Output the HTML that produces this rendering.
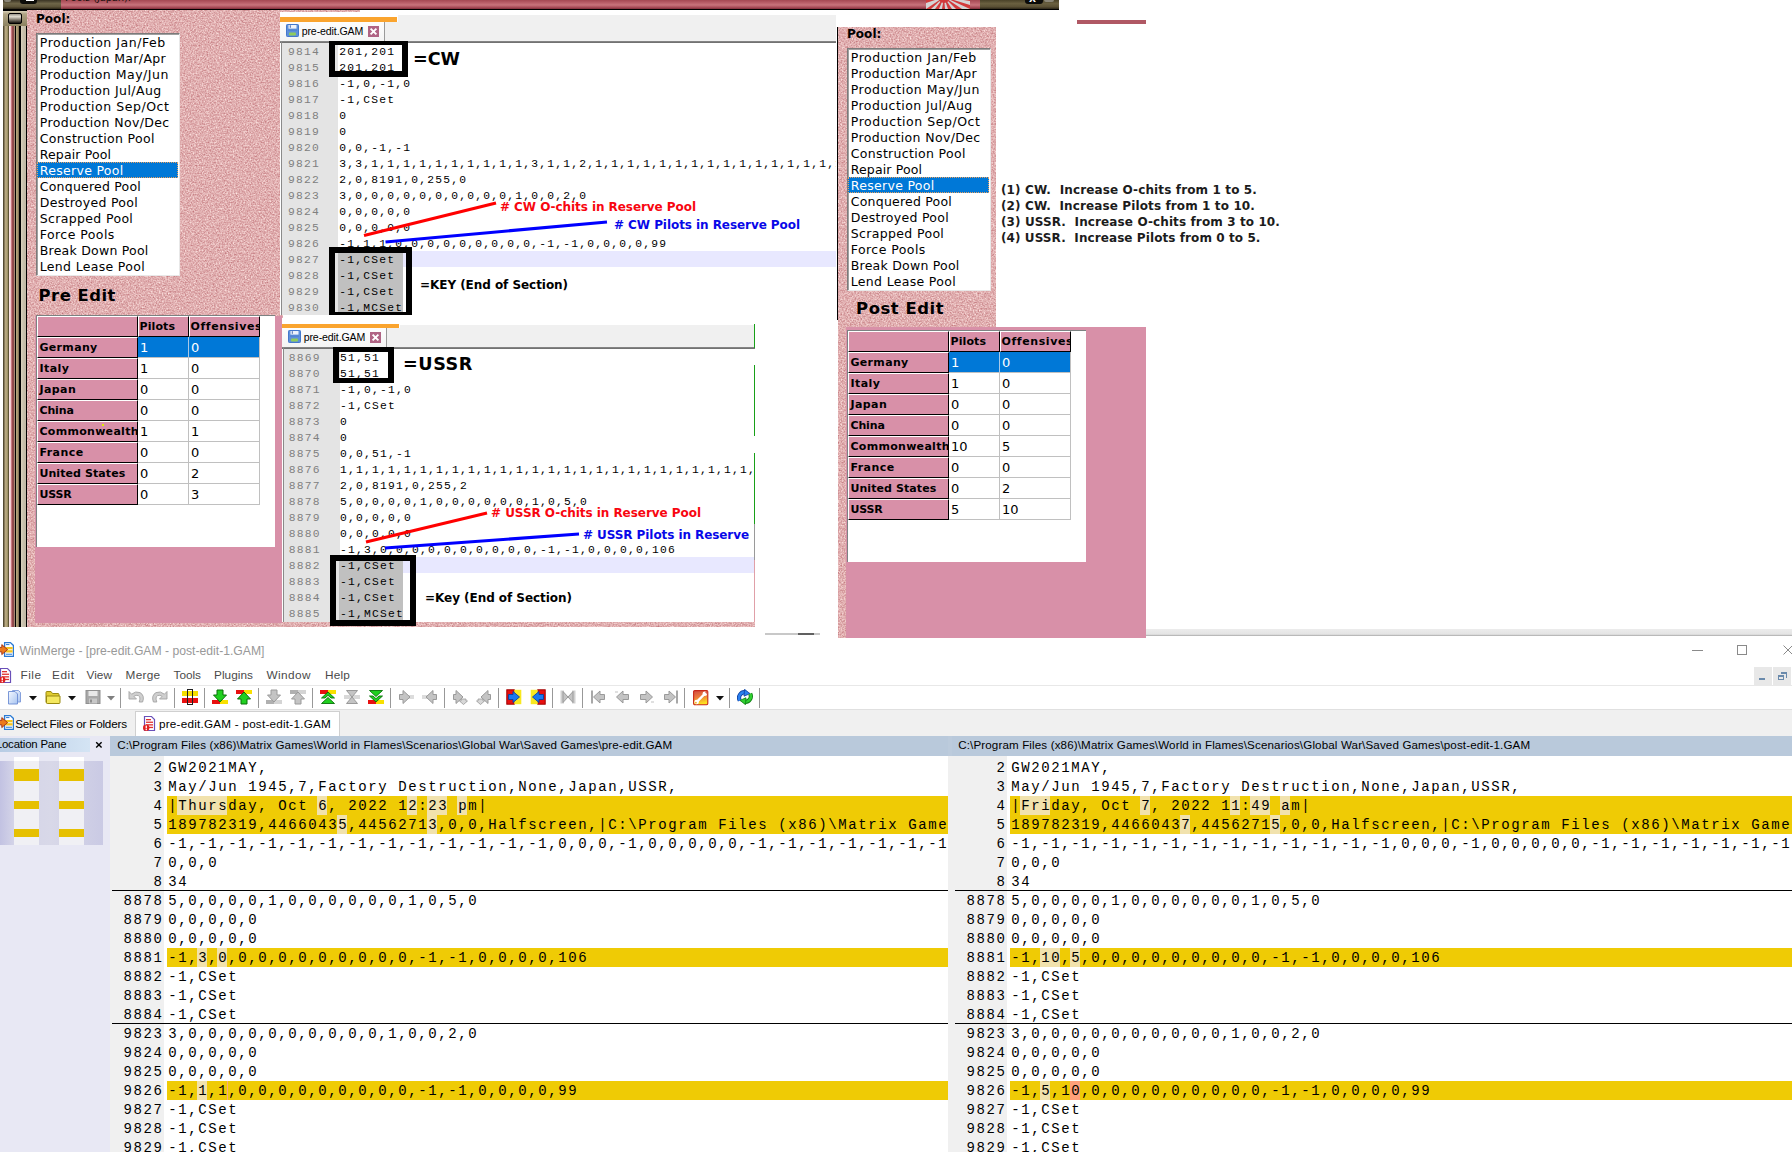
<!DOCTYPE html>
<html lang="en"><head><meta charset="utf-8"><title>WinMerge - [pre-edit.GAM - post-edit-1.GAM]</title>
<style>
html,body{margin:0;padding:0;background:#fff;}
body{width:1792px;height:1152px;position:relative;overflow:hidden;}
.a{position:absolute;box-sizing:border-box;}
.t{position:absolute;white-space:pre;display:block;}
</style></head><body>
<svg class="a" width="0" height="0" style="left:0;top:0"><defs>
<filter id="nz" x="0" y="0" width="100%" height="100%" color-interpolation-filters="sRGB"><feTurbulence type="fractalNoise" baseFrequency="0.65" numOctaves="3" seed="7"/>
<feColorMatrix type="matrix" values="0.30 0 0 0 0.730  0.54 0 0 0 0.415  0.50 0 0 0 0.440  0 0 0 0 1"/></filter>
</defs></svg>
<div class="a" style="left:27px;top:10px;width:256px;height:617px;background:#e2b0b1;overflow:hidden"><svg width="256" height="617" style="position:absolute;left:0;top:0"><rect width="256" height="617" filter="url(#nz)"/></svg></div>
<div class="a" style="left:283px;top:620px;width:472px;height:7px;background:#e2b0b1;overflow:hidden"><svg width="472" height="7" style="position:absolute;left:0;top:0"><rect width="472" height="7" filter="url(#nz)"/></svg></div>
<div class="a" style="left:280px;top:10px;width:80px;height:2.4px;background:#e2b0b1;overflow:hidden"><svg width="80" height="2.4" style="position:absolute;left:0;top:0"><rect width="80" height="2.4" filter="url(#nz)"/></svg></div>
<div class="a" style="left:3px;top:0px;width:1056px;height:10px;background:#000;"></div>
<div class="a" style="left:3px;top:0px;width:58px;height:9px;background:linear-gradient(#3a3424,#6e6548 40%,#5c5338 75%,#2c2618);"></div>
<div class="a" style="left:61px;top:0px;width:919px;height:9px;background:linear-gradient(#a44852,#bc626c 35%,#c8747c 55%,#aa4e5a 80%,#7e2e3a);"></div>
<div class="a" style="left:980px;top:0px;width:79px;height:9px;background:linear-gradient(#4a4228,#6a6040 40%,#5a5034 75%,#2c2618);"></div>
<div class="a" style="left:20px;top:0px;width:17px;height:4px;background:#0c0c08;border-radius:0 0 3px 3px"></div>
<div class="a" style="left:26px;top:0px;width:8px;height:1px;background:#fff;"></div>
<div class="a" style="left:4px;top:0px;width:7px;height:2px;background:#8a8678;border-radius:0 0 4px 4px"></div>
<div class="a" style="left:1025px;top:0px;width:18px;height:4px;background:#0a0a08;border-radius:0 0 3px 3px"></div>
<div class="a" style="left:1044px;top:0px;width:10px;height:2px;background:#8a8678;border-radius:0 0 5px 5px"></div>
<span class="t" style="left:1029px;top:-5.00px;font:700 9px/9px 'DejaVu Sans',Verdana,sans-serif;color:#fff;">X</span>
<div class="a" style="left:61px;top:0;width:200px;height:9px;overflow:hidden">
<span class="t" style="left:4px;top:-7.00px;font:400 10px/10px 'DejaVu Sans',Verdana,sans-serif;color:#201010;letter-spacing:-0.153px;">Pools (Japan):</span>
</div>
<svg class="a" style="left:926px;top:0" width="44" height="9" viewBox="0 0 44 9"><rect width="44" height="9" fill="#d4d4d6"/>
<g fill="#d23a3c"><circle cx="18" cy="-3" r="6"/>
<polygon points="18,-3 0,9 5,9"/><polygon points="18,-3 9,9 13,9"/><polygon points="18,-3 16,9 19,9"/><polygon points="18,-3 22,9 26,9"/>
<polygon points="18,-3 30,9 36,9"/><polygon points="18,-3 44,9 44,5"/><polygon points="18,-3 44,1 44,-2"/><polygon points="18,-3 0,3 0,0"/></g></svg>
<div class="a" style="left:3px;top:10px;width:24px;height:617px;background:linear-gradient(90deg,#3c3420 0,#c0b088 2.7px,#a09468 4.5px,#4c4428 5.8px,#fce8e8 6.3px,#f4d0d4 7.5px,#c87880 8.5px,#904848 9.6px,#8c4c4c 10.8px,#a89078 11.6px,#000 12px,#000 13px,#b4a47c 13.2px,#a89870 14.5px,#7c6850 16px,#000 16.2px,#000 17.6px,#dcd4c0 17.9px,#c8c0ac 20px,#c0b8a4 23px,#000 23.1px,#000 24px);"></div>
<div class="a" style="left:3px;top:10px;width:24px;height:16px;background:linear-gradient(#d8d0b8,#b0a484 20%,#8c8260);border-top:1px solid #000"></div>
<div class="a" style="left:8px;top:13px;width:14px;height:11px;background:linear-gradient(#9a968c,#e0dcd0 30%,#8a8478 60%,#181410);border:1px solid #000;border-radius:2px"></div>
<div class="a" style="left:35px;top:316px;width:247px;height:306.5px;background:#d890a8;"></div>
<span class="t" style="left:36px;top:12.71px;font:700 12px/12px 'DejaVu Sans',Verdana,sans-serif;color:#000;letter-spacing:0.039px;">Pool:</span>
<div class="a" style="left:35.5px;top:32.5px;width:144px;height:243px;background:#fff;border:1px solid #7a7a7a;border-right-color:#e8e8e8;border-bottom-color:#e8e8e8;box-shadow:inset 1px 1px 0 #a0a0a0"></div>
<span class="t" style="left:39.8px;top:37.41px;font:400 12.5px/12.5px 'DejaVu Sans',Verdana,sans-serif;color:#000;letter-spacing:0.550px;">Production Jan/Feb</span>
<span class="t" style="left:39.8px;top:53.41px;font:400 12.5px/12.5px 'DejaVu Sans',Verdana,sans-serif;color:#000;letter-spacing:0.355px;">Production Mar/Apr</span>
<span class="t" style="left:39.8px;top:69.41px;font:400 12.5px/12.5px 'DejaVu Sans',Verdana,sans-serif;color:#000;letter-spacing:0.497px;">Production May/Jun</span>
<span class="t" style="left:39.8px;top:85.41px;font:400 12.5px/12.5px 'DejaVu Sans',Verdana,sans-serif;color:#000;letter-spacing:0.428px;">Production Jul/Aug</span>
<span class="t" style="left:39.8px;top:101.41px;font:400 12.5px/12.5px 'DejaVu Sans',Verdana,sans-serif;color:#000;letter-spacing:0.546px;">Production Sep/Oct</span>
<span class="t" style="left:39.8px;top:117.41px;font:400 12.5px/12.5px 'DejaVu Sans',Verdana,sans-serif;color:#000;letter-spacing:0.357px;">Production Nov/Dec</span>
<span class="t" style="left:39.8px;top:133.41px;font:400 12.5px/12.5px 'DejaVu Sans',Verdana,sans-serif;color:#000;letter-spacing:0.321px;">Construction Pool</span>
<span class="t" style="left:39.8px;top:149.41px;font:400 12.5px/12.5px 'DejaVu Sans',Verdana,sans-serif;color:#000;letter-spacing:0.131px;">Repair Pool</span>
<div class="a" style="left:37px;top:162px;width:141px;height:16px;background:#0078d7;outline:1px dotted #e8a060;outline-offset:-1px"></div>
<span class="t" style="left:39.8px;top:165.41px;font:400 12.5px/12.5px 'DejaVu Sans',Verdana,sans-serif;color:#fff;letter-spacing:0.306px;">Reserve Pool</span>
<span class="t" style="left:39.8px;top:181.41px;font:400 12.5px/12.5px 'DejaVu Sans',Verdana,sans-serif;color:#000;letter-spacing:0.220px;">Conquered Pool</span>
<span class="t" style="left:39.8px;top:197.41px;font:400 12.5px/12.5px 'DejaVu Sans',Verdana,sans-serif;color:#000;letter-spacing:0.285px;">Destroyed Pool</span>
<span class="t" style="left:39.8px;top:213.41px;font:400 12.5px/12.5px 'DejaVu Sans',Verdana,sans-serif;color:#000;letter-spacing:0.343px;">Scrapped Pool</span>
<span class="t" style="left:39.8px;top:229.41px;font:400 12.5px/12.5px 'DejaVu Sans',Verdana,sans-serif;color:#000;letter-spacing:0.439px;">Force Pools</span>
<span class="t" style="left:39.8px;top:245.41px;font:400 12.5px/12.5px 'DejaVu Sans',Verdana,sans-serif;color:#000;letter-spacing:0.232px;">Break Down Pool</span>
<span class="t" style="left:39.8px;top:261.41px;font:400 12.5px/12.5px 'DejaVu Sans',Verdana,sans-serif;color:#000;letter-spacing:0.320px;">Lend Lease Pool</span>
<span class="t" style="left:38.6px;top:288.01px;font:700 16.4px/16.4px 'DejaVu Sans',Verdana,sans-serif;color:#000;letter-spacing:0.498px;">Pre Edit</span>
<div class="a" style="left:36px;top:315px;width:239px;height:231.5px;background:#fff;border-left:1px solid #7c8282;border-top:1px solid #7c8282"></div>
<div class="a" style="left:37px;top:316px;width:101px;height:21px;background:#d890a8;border-top:1px solid #fff;border-left:1px solid #fff;border-right:1px solid #000;border-bottom:1px solid #000;overflow:hidden;">
</div>
<div class="a" style="left:138px;top:316px;width:51px;height:21px;background:#d890a8;border-top:1px solid #fff;border-left:1px solid #fff;border-right:1px solid #000;border-bottom:1px solid #000;overflow:hidden;">
<span class="t" style="left:0.6px;top:3.71px;font:700 11px/11px 'DejaVu Sans',Verdana,sans-serif;color:#000;letter-spacing:0.089px;">Pilots</span>
</div>
<div class="a" style="left:189px;top:316px;width:71px;height:21px;background:#d890a8;border-top:1px solid #fff;border-left:1px solid #fff;border-right:1px solid #000;border-bottom:1px solid #000;overflow:hidden;">
<span class="t" style="left:0.5px;top:3.71px;font:700 11px/11px 'DejaVu Sans',Verdana,sans-serif;color:#000;letter-spacing:0.594px;">Offensives</span>
</div>
<div class="a" style="left:37px;top:337px;width:101px;height:21px;background:#d890a8;border-top:1px solid #fff;border-left:1px solid #fff;border-right:1px solid #000;border-bottom:1px solid #000;overflow:hidden;">
<span class="t" style="left:1.4px;top:3.61px;font:700 11px/11px 'DejaVu Sans',Verdana,sans-serif;color:#000;letter-spacing:0.341px;">Germany</span>
</div>
<div class="a" style="left:138px;top:337px;width:51px;height:21px;background:#0078d7;border-right:1px solid #a8c8e8;border-bottom:1px solid #c0c0c0"></div>
<span class="t" style="left:140.1px;top:340.50px;font:400 13px/13px 'DejaVu Sans',Verdana,sans-serif;color:#fff;">1</span>
<div class="a" style="left:189px;top:337px;width:71px;height:21px;background:#0078d7;border-right:1px solid #c0c0c0;border-bottom:1px solid #c0c0c0"></div>
<span class="t" style="left:191.1px;top:340.50px;font:400 13px/13px 'DejaVu Sans',Verdana,sans-serif;color:#fff;">0</span>
<div class="a" style="left:37px;top:358px;width:101px;height:21px;background:#d890a8;border-top:1px solid #fff;border-left:1px solid #fff;border-right:1px solid #000;border-bottom:1px solid #000;overflow:hidden;">
<span class="t" style="left:1.4px;top:3.61px;font:700 11px/11px 'DejaVu Sans',Verdana,sans-serif;color:#000;letter-spacing:0.456px;">Italy</span>
</div>
<div class="a" style="left:138px;top:358px;width:51px;height:21px;background:#fff;border-right:1px solid #c0c0c0;border-bottom:1px solid #c0c0c0"></div>
<span class="t" style="left:140.1px;top:361.50px;font:400 13px/13px 'DejaVu Sans',Verdana,sans-serif;color:#000;">1</span>
<div class="a" style="left:189px;top:358px;width:71px;height:21px;background:#fff;border-right:1px solid #c0c0c0;border-bottom:1px solid #c0c0c0"></div>
<span class="t" style="left:191.1px;top:361.50px;font:400 13px/13px 'DejaVu Sans',Verdana,sans-serif;color:#000;">0</span>
<div class="a" style="left:37px;top:379px;width:101px;height:21px;background:#d890a8;border-top:1px solid #fff;border-left:1px solid #fff;border-right:1px solid #000;border-bottom:1px solid #000;overflow:hidden;">
<span class="t" style="left:1.4px;top:3.61px;font:700 11px/11px 'DejaVu Sans',Verdana,sans-serif;color:#000;letter-spacing:0.429px;">Japan</span>
</div>
<div class="a" style="left:138px;top:379px;width:51px;height:21px;background:#fff;border-right:1px solid #c0c0c0;border-bottom:1px solid #c0c0c0"></div>
<span class="t" style="left:140.1px;top:382.50px;font:400 13px/13px 'DejaVu Sans',Verdana,sans-serif;color:#000;">0</span>
<div class="a" style="left:189px;top:379px;width:71px;height:21px;background:#fff;border-right:1px solid #c0c0c0;border-bottom:1px solid #c0c0c0"></div>
<span class="t" style="left:191.1px;top:382.50px;font:400 13px/13px 'DejaVu Sans',Verdana,sans-serif;color:#000;">0</span>
<div class="a" style="left:37px;top:400px;width:101px;height:21px;background:#d890a8;border-top:1px solid #fff;border-left:1px solid #fff;border-right:1px solid #000;border-bottom:1px solid #000;overflow:hidden;">
<span class="t" style="left:1.4px;top:3.61px;font:700 11px/11px 'DejaVu Sans',Verdana,sans-serif;color:#000;letter-spacing:-0.087px;">China</span>
</div>
<div class="a" style="left:138px;top:400px;width:51px;height:21px;background:#fff;border-right:1px solid #c0c0c0;border-bottom:1px solid #c0c0c0"></div>
<span class="t" style="left:140.1px;top:403.50px;font:400 13px/13px 'DejaVu Sans',Verdana,sans-serif;color:#000;">0</span>
<div class="a" style="left:189px;top:400px;width:71px;height:21px;background:#fff;border-right:1px solid #c0c0c0;border-bottom:1px solid #c0c0c0"></div>
<span class="t" style="left:191.1px;top:403.50px;font:400 13px/13px 'DejaVu Sans',Verdana,sans-serif;color:#000;">0</span>
<div class="a" style="left:37px;top:421px;width:101px;height:21px;background:#d890a8;border-top:1px solid #fff;border-left:1px solid #fff;border-right:1px solid #000;border-bottom:1px solid #000;overflow:hidden;">
<span class="t" style="left:1.4px;top:3.61px;font:700 11px/11px 'DejaVu Sans',Verdana,sans-serif;color:#000;letter-spacing:0.303px;">Commonwealth</span>
</div>
<div class="a" style="left:138px;top:421px;width:51px;height:21px;background:#fff;border-right:1px solid #c0c0c0;border-bottom:1px solid #c0c0c0"></div>
<span class="t" style="left:140.1px;top:424.50px;font:400 13px/13px 'DejaVu Sans',Verdana,sans-serif;color:#000;">1</span>
<div class="a" style="left:189px;top:421px;width:71px;height:21px;background:#fff;border-right:1px solid #c0c0c0;border-bottom:1px solid #c0c0c0"></div>
<span class="t" style="left:191.1px;top:424.50px;font:400 13px/13px 'DejaVu Sans',Verdana,sans-serif;color:#000;">1</span>
<div class="a" style="left:37px;top:442px;width:101px;height:21px;background:#d890a8;border-top:1px solid #fff;border-left:1px solid #fff;border-right:1px solid #000;border-bottom:1px solid #000;overflow:hidden;">
<span class="t" style="left:1.4px;top:3.61px;font:700 11px/11px 'DejaVu Sans',Verdana,sans-serif;color:#000;letter-spacing:0.453px;">France</span>
</div>
<div class="a" style="left:138px;top:442px;width:51px;height:21px;background:#fff;border-right:1px solid #c0c0c0;border-bottom:1px solid #c0c0c0"></div>
<span class="t" style="left:140.1px;top:445.50px;font:400 13px/13px 'DejaVu Sans',Verdana,sans-serif;color:#000;">0</span>
<div class="a" style="left:189px;top:442px;width:71px;height:21px;background:#fff;border-right:1px solid #c0c0c0;border-bottom:1px solid #c0c0c0"></div>
<span class="t" style="left:191.1px;top:445.50px;font:400 13px/13px 'DejaVu Sans',Verdana,sans-serif;color:#000;">0</span>
<div class="a" style="left:37px;top:463px;width:101px;height:21px;background:#d890a8;border-top:1px solid #fff;border-left:1px solid #fff;border-right:1px solid #000;border-bottom:1px solid #000;overflow:hidden;">
<span class="t" style="left:1.4px;top:3.61px;font:700 11px/11px 'DejaVu Sans',Verdana,sans-serif;color:#000;letter-spacing:0.090px;">United States</span>
</div>
<div class="a" style="left:138px;top:463px;width:51px;height:21px;background:#fff;border-right:1px solid #c0c0c0;border-bottom:1px solid #c0c0c0"></div>
<span class="t" style="left:140.1px;top:466.50px;font:400 13px/13px 'DejaVu Sans',Verdana,sans-serif;color:#000;">0</span>
<div class="a" style="left:189px;top:463px;width:71px;height:21px;background:#fff;border-right:1px solid #c0c0c0;border-bottom:1px solid #c0c0c0"></div>
<span class="t" style="left:191.1px;top:466.50px;font:400 13px/13px 'DejaVu Sans',Verdana,sans-serif;color:#000;">2</span>
<div class="a" style="left:37px;top:484px;width:101px;height:21px;background:#d890a8;border-top:1px solid #fff;border-left:1px solid #fff;border-right:1px solid #000;border-bottom:1px solid #000;overflow:hidden;">
<span class="t" style="left:1.4px;top:3.61px;font:700 11px/11px 'DejaVu Sans',Verdana,sans-serif;color:#000;letter-spacing:-0.116px;">USSR</span>
</div>
<div class="a" style="left:138px;top:484px;width:51px;height:21px;background:#fff;border-right:1px solid #c0c0c0;border-bottom:1px solid #c0c0c0"></div>
<span class="t" style="left:140.1px;top:487.50px;font:400 13px/13px 'DejaVu Sans',Verdana,sans-serif;color:#000;">0</span>
<div class="a" style="left:189px;top:484px;width:71px;height:21px;background:#fff;border-right:1px solid #c0c0c0;border-bottom:1px solid #c0c0c0"></div>
<span class="t" style="left:191.1px;top:487.50px;font:400 13px/13px 'DejaVu Sans',Verdana,sans-serif;color:#000;">3</span>
<div class="a" style="left:102px;top:424px;width:2px;height:2px;background:#e0f000;"></div>
<div class="a" style="left:838px;top:27px;width:158px;height:300px;background:#e2b0b1;overflow:hidden"><svg width="158" height="300" style="position:absolute;left:0;top:0"><rect width="158" height="300" filter="url(#nz)"/></svg></div>
<div class="a" style="left:838px;top:327px;width:8px;height:311px;background:#e2b0b1;overflow:hidden"><svg width="8" height="311" style="position:absolute;left:0;top:0"><rect width="8" height="311" filter="url(#nz)"/></svg></div>
<div class="a" style="left:836.5px;top:27px;width:1.5px;height:293px;background:#000;"></div>
<div class="a" style="left:846px;top:327px;width:300px;height:311px;background:#d890a8;"></div>
<span class="t" style="left:847px;top:27.71px;font:700 12px/12px 'DejaVu Sans',Verdana,sans-serif;color:#000;letter-spacing:0.039px;">Pool:</span>
<div class="a" style="left:846.5px;top:47.5px;width:144px;height:243px;background:#fff;border:1px solid #7a7a7a;border-right-color:#e8e8e8;border-bottom-color:#e8e8e8;box-shadow:inset 1px 1px 0 #a0a0a0"></div>
<span class="t" style="left:850.8px;top:52.41px;font:400 12.5px/12.5px 'DejaVu Sans',Verdana,sans-serif;color:#000;letter-spacing:0.550px;">Production Jan/Feb</span>
<span class="t" style="left:850.8px;top:68.41px;font:400 12.5px/12.5px 'DejaVu Sans',Verdana,sans-serif;color:#000;letter-spacing:0.355px;">Production Mar/Apr</span>
<span class="t" style="left:850.8px;top:84.41px;font:400 12.5px/12.5px 'DejaVu Sans',Verdana,sans-serif;color:#000;letter-spacing:0.497px;">Production May/Jun</span>
<span class="t" style="left:850.8px;top:100.41px;font:400 12.5px/12.5px 'DejaVu Sans',Verdana,sans-serif;color:#000;letter-spacing:0.428px;">Production Jul/Aug</span>
<span class="t" style="left:850.8px;top:116.41px;font:400 12.5px/12.5px 'DejaVu Sans',Verdana,sans-serif;color:#000;letter-spacing:0.546px;">Production Sep/Oct</span>
<span class="t" style="left:850.8px;top:132.41px;font:400 12.5px/12.5px 'DejaVu Sans',Verdana,sans-serif;color:#000;letter-spacing:0.357px;">Production Nov/Dec</span>
<span class="t" style="left:850.8px;top:148.41px;font:400 12.5px/12.5px 'DejaVu Sans',Verdana,sans-serif;color:#000;letter-spacing:0.321px;">Construction Pool</span>
<span class="t" style="left:850.8px;top:164.41px;font:400 12.5px/12.5px 'DejaVu Sans',Verdana,sans-serif;color:#000;letter-spacing:0.131px;">Repair Pool</span>
<div class="a" style="left:848px;top:177px;width:141px;height:16px;background:#0078d7;outline:1px dotted #e8a060;outline-offset:-1px"></div>
<span class="t" style="left:850.8px;top:180.41px;font:400 12.5px/12.5px 'DejaVu Sans',Verdana,sans-serif;color:#fff;letter-spacing:0.306px;">Reserve Pool</span>
<span class="t" style="left:850.8px;top:196.41px;font:400 12.5px/12.5px 'DejaVu Sans',Verdana,sans-serif;color:#000;letter-spacing:0.220px;">Conquered Pool</span>
<span class="t" style="left:850.8px;top:212.41px;font:400 12.5px/12.5px 'DejaVu Sans',Verdana,sans-serif;color:#000;letter-spacing:0.285px;">Destroyed Pool</span>
<span class="t" style="left:850.8px;top:228.41px;font:400 12.5px/12.5px 'DejaVu Sans',Verdana,sans-serif;color:#000;letter-spacing:0.343px;">Scrapped Pool</span>
<span class="t" style="left:850.8px;top:244.41px;font:400 12.5px/12.5px 'DejaVu Sans',Verdana,sans-serif;color:#000;letter-spacing:0.439px;">Force Pools</span>
<span class="t" style="left:850.8px;top:260.41px;font:400 12.5px/12.5px 'DejaVu Sans',Verdana,sans-serif;color:#000;letter-spacing:0.232px;">Break Down Pool</span>
<span class="t" style="left:850.8px;top:276.41px;font:400 12.5px/12.5px 'DejaVu Sans',Verdana,sans-serif;color:#000;letter-spacing:0.320px;">Lend Lease Pool</span>
<span class="t" style="left:856.1px;top:301.20px;font:700 16.4px/16.4px 'DejaVu Sans',Verdana,sans-serif;color:#000;letter-spacing:0.559px;">Post Edit</span>
<div class="a" style="left:847px;top:330px;width:239px;height:231.5px;background:#fff;border-left:1px solid #7c8282;border-top:1px solid #7c8282"></div>
<div class="a" style="left:848px;top:331px;width:101px;height:21px;background:#d890a8;border-top:1px solid #fff;border-left:1px solid #fff;border-right:1px solid #000;border-bottom:1px solid #000;overflow:hidden;">
</div>
<div class="a" style="left:949px;top:331px;width:51px;height:21px;background:#d890a8;border-top:1px solid #fff;border-left:1px solid #fff;border-right:1px solid #000;border-bottom:1px solid #000;overflow:hidden;">
<span class="t" style="left:0.6px;top:3.71px;font:700 11px/11px 'DejaVu Sans',Verdana,sans-serif;color:#000;letter-spacing:0.089px;">Pilots</span>
</div>
<div class="a" style="left:1000px;top:331px;width:71px;height:21px;background:#d890a8;border-top:1px solid #fff;border-left:1px solid #fff;border-right:1px solid #000;border-bottom:1px solid #000;overflow:hidden;">
<span class="t" style="left:0.5px;top:3.71px;font:700 11px/11px 'DejaVu Sans',Verdana,sans-serif;color:#000;letter-spacing:0.594px;">Offensives</span>
</div>
<div class="a" style="left:848px;top:352px;width:101px;height:21px;background:#d890a8;border-top:1px solid #fff;border-left:1px solid #fff;border-right:1px solid #000;border-bottom:1px solid #000;overflow:hidden;">
<span class="t" style="left:1.4px;top:3.61px;font:700 11px/11px 'DejaVu Sans',Verdana,sans-serif;color:#000;letter-spacing:0.341px;">Germany</span>
</div>
<div class="a" style="left:949px;top:352px;width:51px;height:21px;background:#0078d7;border-right:1px solid #a8c8e8;border-bottom:1px solid #c0c0c0"></div>
<span class="t" style="left:951.1px;top:355.50px;font:400 13px/13px 'DejaVu Sans',Verdana,sans-serif;color:#fff;">1</span>
<div class="a" style="left:1000px;top:352px;width:71px;height:21px;background:#0078d7;border-right:1px solid #c0c0c0;border-bottom:1px solid #c0c0c0"></div>
<span class="t" style="left:1002.1px;top:355.50px;font:400 13px/13px 'DejaVu Sans',Verdana,sans-serif;color:#fff;">0</span>
<div class="a" style="left:848px;top:373px;width:101px;height:21px;background:#d890a8;border-top:1px solid #fff;border-left:1px solid #fff;border-right:1px solid #000;border-bottom:1px solid #000;overflow:hidden;">
<span class="t" style="left:1.4px;top:3.61px;font:700 11px/11px 'DejaVu Sans',Verdana,sans-serif;color:#000;letter-spacing:0.456px;">Italy</span>
</div>
<div class="a" style="left:949px;top:373px;width:51px;height:21px;background:#fff;border-right:1px solid #c0c0c0;border-bottom:1px solid #c0c0c0"></div>
<span class="t" style="left:951.1px;top:376.50px;font:400 13px/13px 'DejaVu Sans',Verdana,sans-serif;color:#000;">1</span>
<div class="a" style="left:1000px;top:373px;width:71px;height:21px;background:#fff;border-right:1px solid #c0c0c0;border-bottom:1px solid #c0c0c0"></div>
<span class="t" style="left:1002.1px;top:376.50px;font:400 13px/13px 'DejaVu Sans',Verdana,sans-serif;color:#000;">0</span>
<div class="a" style="left:848px;top:394px;width:101px;height:21px;background:#d890a8;border-top:1px solid #fff;border-left:1px solid #fff;border-right:1px solid #000;border-bottom:1px solid #000;overflow:hidden;">
<span class="t" style="left:1.4px;top:3.61px;font:700 11px/11px 'DejaVu Sans',Verdana,sans-serif;color:#000;letter-spacing:0.429px;">Japan</span>
</div>
<div class="a" style="left:949px;top:394px;width:51px;height:21px;background:#fff;border-right:1px solid #c0c0c0;border-bottom:1px solid #c0c0c0"></div>
<span class="t" style="left:951.1px;top:397.50px;font:400 13px/13px 'DejaVu Sans',Verdana,sans-serif;color:#000;">0</span>
<div class="a" style="left:1000px;top:394px;width:71px;height:21px;background:#fff;border-right:1px solid #c0c0c0;border-bottom:1px solid #c0c0c0"></div>
<span class="t" style="left:1002.1px;top:397.50px;font:400 13px/13px 'DejaVu Sans',Verdana,sans-serif;color:#000;">0</span>
<div class="a" style="left:848px;top:415px;width:101px;height:21px;background:#d890a8;border-top:1px solid #fff;border-left:1px solid #fff;border-right:1px solid #000;border-bottom:1px solid #000;overflow:hidden;">
<span class="t" style="left:1.4px;top:3.61px;font:700 11px/11px 'DejaVu Sans',Verdana,sans-serif;color:#000;letter-spacing:-0.087px;">China</span>
</div>
<div class="a" style="left:949px;top:415px;width:51px;height:21px;background:#fff;border-right:1px solid #c0c0c0;border-bottom:1px solid #c0c0c0"></div>
<span class="t" style="left:951.1px;top:418.50px;font:400 13px/13px 'DejaVu Sans',Verdana,sans-serif;color:#000;">0</span>
<div class="a" style="left:1000px;top:415px;width:71px;height:21px;background:#fff;border-right:1px solid #c0c0c0;border-bottom:1px solid #c0c0c0"></div>
<span class="t" style="left:1002.1px;top:418.50px;font:400 13px/13px 'DejaVu Sans',Verdana,sans-serif;color:#000;">0</span>
<div class="a" style="left:848px;top:436px;width:101px;height:21px;background:#d890a8;border-top:1px solid #fff;border-left:1px solid #fff;border-right:1px solid #000;border-bottom:1px solid #000;overflow:hidden;">
<span class="t" style="left:1.4px;top:3.61px;font:700 11px/11px 'DejaVu Sans',Verdana,sans-serif;color:#000;letter-spacing:0.303px;">Commonwealth</span>
</div>
<div class="a" style="left:949px;top:436px;width:51px;height:21px;background:#fff;border-right:1px solid #c0c0c0;border-bottom:1px solid #c0c0c0"></div>
<span class="t" style="left:951.1px;top:439.50px;font:400 13px/13px 'DejaVu Sans',Verdana,sans-serif;color:#000;">10</span>
<div class="a" style="left:1000px;top:436px;width:71px;height:21px;background:#fff;border-right:1px solid #c0c0c0;border-bottom:1px solid #c0c0c0"></div>
<span class="t" style="left:1002.1px;top:439.50px;font:400 13px/13px 'DejaVu Sans',Verdana,sans-serif;color:#000;">5</span>
<div class="a" style="left:848px;top:457px;width:101px;height:21px;background:#d890a8;border-top:1px solid #fff;border-left:1px solid #fff;border-right:1px solid #000;border-bottom:1px solid #000;overflow:hidden;">
<span class="t" style="left:1.4px;top:3.61px;font:700 11px/11px 'DejaVu Sans',Verdana,sans-serif;color:#000;letter-spacing:0.453px;">France</span>
</div>
<div class="a" style="left:949px;top:457px;width:51px;height:21px;background:#fff;border-right:1px solid #c0c0c0;border-bottom:1px solid #c0c0c0"></div>
<span class="t" style="left:951.1px;top:460.50px;font:400 13px/13px 'DejaVu Sans',Verdana,sans-serif;color:#000;">0</span>
<div class="a" style="left:1000px;top:457px;width:71px;height:21px;background:#fff;border-right:1px solid #c0c0c0;border-bottom:1px solid #c0c0c0"></div>
<span class="t" style="left:1002.1px;top:460.50px;font:400 13px/13px 'DejaVu Sans',Verdana,sans-serif;color:#000;">0</span>
<div class="a" style="left:848px;top:478px;width:101px;height:21px;background:#d890a8;border-top:1px solid #fff;border-left:1px solid #fff;border-right:1px solid #000;border-bottom:1px solid #000;overflow:hidden;">
<span class="t" style="left:1.4px;top:3.61px;font:700 11px/11px 'DejaVu Sans',Verdana,sans-serif;color:#000;letter-spacing:0.090px;">United States</span>
</div>
<div class="a" style="left:949px;top:478px;width:51px;height:21px;background:#fff;border-right:1px solid #c0c0c0;border-bottom:1px solid #c0c0c0"></div>
<span class="t" style="left:951.1px;top:481.50px;font:400 13px/13px 'DejaVu Sans',Verdana,sans-serif;color:#000;">0</span>
<div class="a" style="left:1000px;top:478px;width:71px;height:21px;background:#fff;border-right:1px solid #c0c0c0;border-bottom:1px solid #c0c0c0"></div>
<span class="t" style="left:1002.1px;top:481.50px;font:400 13px/13px 'DejaVu Sans',Verdana,sans-serif;color:#000;">2</span>
<div class="a" style="left:848px;top:499px;width:101px;height:21px;background:#d890a8;border-top:1px solid #fff;border-left:1px solid #fff;border-right:1px solid #000;border-bottom:1px solid #000;overflow:hidden;">
<span class="t" style="left:1.4px;top:3.61px;font:700 11px/11px 'DejaVu Sans',Verdana,sans-serif;color:#000;letter-spacing:-0.116px;">USSR</span>
</div>
<div class="a" style="left:949px;top:499px;width:51px;height:21px;background:#fff;border-right:1px solid #c0c0c0;border-bottom:1px solid #c0c0c0"></div>
<span class="t" style="left:951.1px;top:502.50px;font:400 13px/13px 'DejaVu Sans',Verdana,sans-serif;color:#000;">5</span>
<div class="a" style="left:1000px;top:499px;width:71px;height:21px;background:#fff;border-right:1px solid #c0c0c0;border-bottom:1px solid #c0c0c0"></div>
<span class="t" style="left:1002.1px;top:502.50px;font:400 13px/13px 'DejaVu Sans',Verdana,sans-serif;color:#000;">10</span>
<div class="a" style="left:1077px;top:20px;width:69px;height:4px;background:#b05864;"></div>
<div class="a" style="left:1146px;top:629px;width:646px;height:6.5px;background:linear-gradient(#ececec,#e4e4e4 75%,#a8a8a8);"></div>
<div class="a" style="left:765px;top:632.5px;width:55px;height:2px;background:#c8c8c8;"></div>
<div class="a" style="left:798px;top:632.5px;width:16px;height:2px;background:#606060;"></div>
<span class="t" style="left:1001px;top:183.50px;font:700 12px/12px 'DejaVu Sans',Verdana,sans-serif;color:#1c1c1c;letter-spacing:0.129px;">(1) CW.  Increase O-chits from 1 to 5.</span>
<span class="t" style="left:1001px;top:199.50px;font:700 12px/12px 'DejaVu Sans',Verdana,sans-serif;color:#1c1c1c;letter-spacing:0.117px;">(2) CW.  Increase Pilots from 1 to 10.</span>
<span class="t" style="left:1001px;top:215.50px;font:700 12px/12px 'DejaVu Sans',Verdana,sans-serif;color:#1c1c1c;letter-spacing:0.114px;">(3) USSR.  Increase O-chits from 3 to 10.</span>
<span class="t" style="left:1001px;top:231.50px;font:700 12px/12px 'DejaVu Sans',Verdana,sans-serif;color:#1c1c1c;letter-spacing:0.088px;">(4) USSR.  Increase Pilots from 0 to 5.</span>
<div class="a" style="left:280px;top:12px;width:556px;height:303px;background:#fff;overflow:hidden">
<div class="a" style="left:0px;top:2.5px;width:556px;height:27.5px;background:#f0f0f0;"></div>
<div class="a" style="left:0px;top:0px;width:118px;height:10px;background:#fff;"></div>
<div class="a" style="left:0px;top:5px;width:117px;height:5px;background:#faa42e;"></div>
<div class="a" style="left:0px;top:10px;width:105px;height:19.5px;background:linear-gradient(#fdfdfd,#f4f4f4);border-right:1px solid #9a9a9a"></div>
<svg class="a" style="left:6px;top:11.9px" width="13" height="13" viewBox="0 0 13 13"><rect x="0.5" y="0.5" width="12" height="12" rx="0.8" fill="#5e90da" stroke="#4478cc"/><rect x="2.5" y="1" width="8" height="3.6" fill="#eef3fc"/><rect x="3.8" y="1.2" width="1" height="2.6" fill="#4a6cb0"/><rect x="2" y="5.6" width="9" height="1" fill="#4d7fd0"/><rect x="3" y="8.6" width="7" height="2.8" rx="0.8" fill="#90cc5c"/></svg>
<span class="t" style="left:21.7px;top:13.71px;font:400 10.6px/10.6px 'Liberation Sans',Arial,sans-serif;color:#000;letter-spacing:-0.117px;">pre-edit.GAM</span>
<svg class="a" style="left:88px;top:13.5px" width="11" height="11" viewBox="0 0 11 11"><rect width="11" height="11" fill="#b06484"/><path d="M2.6 2.6 L8.4 8.4 M8.4 2.6 L2.6 8.4" stroke="#fff" stroke-width="1.9"/></svg>
<div class="a" style="left:0px;top:29px;width:556px;height:2px;background:linear-gradient(#8c8c8c,#6a6a6a);"></div>
<div class="a" style="left:1px;top:29px;width:1px;height:274px;background:#8a8a8a;"></div>
<div class="a" style="left:2px;top:31px;width:56px;height:272px;background:#e4e4e4;"></div>
<div class="a" style="left:58px;top:239px;width:498px;height:16px;background:#e8e8ff;"></div>
<div class="a" style="left:58px;top:239px;width:64.5px;height:64px;background:#c0c0c0;"></div>
<span class="t" style="left:8.0px;top:34.71px;font:400 11.3px/11.3px 'Liberation Mono','Courier New',monospace;color:#808080;letter-spacing:1.219px;">9814</span>
<span class="t" style="left:59.2px;top:34.71px;font:400 11.3px/11.3px 'Liberation Mono','Courier New',monospace;color:#000;letter-spacing:1.219px;">201,201</span>
<span class="t" style="left:8.0px;top:50.71px;font:400 11.3px/11.3px 'Liberation Mono','Courier New',monospace;color:#808080;letter-spacing:1.219px;">9815</span>
<span class="t" style="left:59.2px;top:50.71px;font:400 11.3px/11.3px 'Liberation Mono','Courier New',monospace;color:#000;letter-spacing:1.219px;">201,201</span>
<span class="t" style="left:8.0px;top:66.71px;font:400 11.3px/11.3px 'Liberation Mono','Courier New',monospace;color:#808080;letter-spacing:1.219px;">9816</span>
<span class="t" style="left:59.2px;top:66.71px;font:400 11.3px/11.3px 'Liberation Mono','Courier New',monospace;color:#000;letter-spacing:1.220px;">-1,0,-1,0</span>
<span class="t" style="left:8.0px;top:82.71px;font:400 11.3px/11.3px 'Liberation Mono','Courier New',monospace;color:#808080;letter-spacing:1.219px;">9817</span>
<span class="t" style="left:59.2px;top:82.71px;font:400 11.3px/11.3px 'Liberation Mono','Courier New',monospace;color:#000;letter-spacing:1.219px;">-1,CSet</span>
<span class="t" style="left:8.0px;top:98.71px;font:400 11.3px/11.3px 'Liberation Mono','Courier New',monospace;color:#808080;letter-spacing:1.219px;">9818</span>
<span class="t" style="left:59.2px;top:98.71px;font:400 11.3px/11.3px 'Liberation Mono','Courier New',monospace;color:#000;letter-spacing:1.219px;">0</span>
<span class="t" style="left:8.0px;top:114.71px;font:400 11.3px/11.3px 'Liberation Mono','Courier New',monospace;color:#808080;letter-spacing:1.219px;">9819</span>
<span class="t" style="left:59.2px;top:114.71px;font:400 11.3px/11.3px 'Liberation Mono','Courier New',monospace;color:#000;letter-spacing:1.219px;">0</span>
<span class="t" style="left:8.0px;top:130.71px;font:400 11.3px/11.3px 'Liberation Mono','Courier New',monospace;color:#808080;letter-spacing:1.219px;">9820</span>
<span class="t" style="left:59.2px;top:130.71px;font:400 11.3px/11.3px 'Liberation Mono','Courier New',monospace;color:#000;letter-spacing:1.220px;">0,0,-1,-1</span>
<span class="t" style="left:8.0px;top:146.71px;font:400 11.3px/11.3px 'Liberation Mono','Courier New',monospace;color:#808080;letter-spacing:1.219px;">9821</span>
<span class="t" style="left:59.2px;top:146.71px;font:400 11.3px/11.3px 'Liberation Mono','Courier New',monospace;color:#000;letter-spacing:1.221px;">3,3,1,1,1,1,1,1,1,1,1,1,3,1,1,2,1,1,1,1,1,1,1,1,1,1,1,1,1,1,1,1,1</span>
<span class="t" style="left:8.0px;top:162.71px;font:400 11.3px/11.3px 'Liberation Mono','Courier New',monospace;color:#808080;letter-spacing:1.219px;">9822</span>
<span class="t" style="left:59.2px;top:162.71px;font:400 11.3px/11.3px 'Liberation Mono','Courier New',monospace;color:#000;letter-spacing:1.221px;">2,0,8191,0,255,0</span>
<span class="t" style="left:8.0px;top:178.71px;font:400 11.3px/11.3px 'Liberation Mono','Courier New',monospace;color:#808080;letter-spacing:1.219px;">9823</span>
<span class="t" style="left:59.2px;top:178.71px;font:400 11.3px/11.3px 'Liberation Mono','Courier New',monospace;color:#000;letter-spacing:1.220px;">3,0,0,0,0,0,0,0,0,0,0,1,0,0,2,0</span>
<span class="t" style="left:8.0px;top:194.71px;font:400 11.3px/11.3px 'Liberation Mono','Courier New',monospace;color:#808080;letter-spacing:1.219px;">9824</span>
<span class="t" style="left:59.2px;top:194.71px;font:400 11.3px/11.3px 'Liberation Mono','Courier New',monospace;color:#000;letter-spacing:1.220px;">0,0,0,0,0</span>
<span class="t" style="left:8.0px;top:210.71px;font:400 11.3px/11.3px 'Liberation Mono','Courier New',monospace;color:#808080;letter-spacing:1.219px;">9825</span>
<span class="t" style="left:59.2px;top:210.71px;font:400 11.3px/11.3px 'Liberation Mono','Courier New',monospace;color:#000;letter-spacing:1.220px;">0,0,0,0,0</span>
<span class="t" style="left:8.0px;top:226.71px;font:400 11.3px/11.3px 'Liberation Mono','Courier New',monospace;color:#808080;letter-spacing:1.219px;">9826</span>
<span class="t" style="left:59.2px;top:226.71px;font:400 11.3px/11.3px 'Liberation Mono','Courier New',monospace;color:#000;letter-spacing:1.221px;">-1,1,1,0,0,0,0,0,0,0,0,0,-1,-1,0,0,0,0,99</span>
<span class="t" style="left:8.0px;top:242.71px;font:400 11.3px/11.3px 'Liberation Mono','Courier New',monospace;color:#808080;letter-spacing:1.219px;">9827</span>
<span class="t" style="left:59.2px;top:242.71px;font:400 11.3px/11.3px 'Liberation Mono','Courier New',monospace;color:#000;letter-spacing:1.219px;">-1,CSet</span>
<span class="t" style="left:8.0px;top:258.71px;font:400 11.3px/11.3px 'Liberation Mono','Courier New',monospace;color:#808080;letter-spacing:1.219px;">9828</span>
<span class="t" style="left:59.2px;top:258.71px;font:400 11.3px/11.3px 'Liberation Mono','Courier New',monospace;color:#000;letter-spacing:1.219px;">-1,CSet</span>
<span class="t" style="left:8.0px;top:274.71px;font:400 11.3px/11.3px 'Liberation Mono','Courier New',monospace;color:#808080;letter-spacing:1.219px;">9829</span>
<span class="t" style="left:59.2px;top:274.71px;font:400 11.3px/11.3px 'Liberation Mono','Courier New',monospace;color:#000;letter-spacing:1.219px;">-1,CSet</span>
<span class="t" style="left:8.0px;top:290.71px;font:400 11.3px/11.3px 'Liberation Mono','Courier New',monospace;color:#808080;letter-spacing:1.219px;">9830</span>
<span class="t" style="left:59.2px;top:290.71px;font:400 11.3px/11.3px 'Liberation Mono','Courier New',monospace;color:#000;letter-spacing:1.221px;">-1,MCSet</span>
</div>
<div class="a" style="left:282px;top:318px;width:473px;height:304px;background:#fff;overflow:hidden">
<div class="a" style="left:0px;top:7px;width:473px;height:23px;background:#f0f0f0;"></div>
<div class="a" style="left:0px;top:0px;width:118px;height:10px;background:#fff;"></div>
<div class="a" style="left:0px;top:6px;width:117px;height:4px;background:#faa42e;"></div>
<div class="a" style="left:0px;top:10px;width:105px;height:19.5px;background:linear-gradient(#fdfdfd,#f4f4f4);border-right:1px solid #9a9a9a"></div>
<svg class="a" style="left:6px;top:11.9px" width="13" height="13" viewBox="0 0 13 13"><rect x="0.5" y="0.5" width="12" height="12" rx="0.8" fill="#5e90da" stroke="#4478cc"/><rect x="2.5" y="1" width="8" height="3.6" fill="#eef3fc"/><rect x="3.8" y="1.2" width="1" height="2.6" fill="#4a6cb0"/><rect x="2" y="5.6" width="9" height="1" fill="#4d7fd0"/><rect x="3" y="8.6" width="7" height="2.8" rx="0.8" fill="#90cc5c"/></svg>
<span class="t" style="left:21.7px;top:13.71px;font:400 10.6px/10.6px 'Liberation Sans',Arial,sans-serif;color:#000;letter-spacing:-0.117px;">pre-edit.GAM</span>
<svg class="a" style="left:88px;top:13.5px" width="11" height="11" viewBox="0 0 11 11"><rect width="11" height="11" fill="#b06484"/><path d="M2.6 2.6 L8.4 8.4 M8.4 2.6 L2.6 8.4" stroke="#fff" stroke-width="1.9"/></svg>
<div class="a" style="left:0px;top:29px;width:473px;height:2px;background:linear-gradient(#8c8c8c,#6a6a6a);"></div>
<div class="a" style="left:1px;top:29px;width:1px;height:275px;background:#8a8a8a;"></div>
<div class="a" style="left:2px;top:31px;width:56px;height:273px;background:#e4e4e4;"></div>
<div class="a" style="left:58px;top:239px;width:415px;height:16px;background:#e8e8ff;"></div>
<div class="a" style="left:57px;top:239px;width:64px;height:65px;background:#c0c0c0;"></div>
<span class="t" style="left:6.8px;top:34.71px;font:400 11.3px/11.3px 'Liberation Mono','Courier New',monospace;color:#808080;letter-spacing:1.219px;">8869</span>
<span class="t" style="left:58.0px;top:34.71px;font:400 11.3px/11.3px 'Liberation Mono','Courier New',monospace;color:#000;letter-spacing:1.219px;">51,51</span>
<span class="t" style="left:6.8px;top:50.71px;font:400 11.3px/11.3px 'Liberation Mono','Courier New',monospace;color:#808080;letter-spacing:1.219px;">8870</span>
<span class="t" style="left:58.0px;top:50.71px;font:400 11.3px/11.3px 'Liberation Mono','Courier New',monospace;color:#000;letter-spacing:1.219px;">51,51</span>
<span class="t" style="left:6.8px;top:66.71px;font:400 11.3px/11.3px 'Liberation Mono','Courier New',monospace;color:#808080;letter-spacing:1.219px;">8871</span>
<span class="t" style="left:58.0px;top:66.71px;font:400 11.3px/11.3px 'Liberation Mono','Courier New',monospace;color:#000;letter-spacing:1.220px;">-1,0,-1,0</span>
<span class="t" style="left:6.8px;top:82.71px;font:400 11.3px/11.3px 'Liberation Mono','Courier New',monospace;color:#808080;letter-spacing:1.219px;">8872</span>
<span class="t" style="left:58.0px;top:82.71px;font:400 11.3px/11.3px 'Liberation Mono','Courier New',monospace;color:#000;letter-spacing:1.219px;">-1,CSet</span>
<span class="t" style="left:6.8px;top:98.71px;font:400 11.3px/11.3px 'Liberation Mono','Courier New',monospace;color:#808080;letter-spacing:1.219px;">8873</span>
<span class="t" style="left:58.0px;top:98.71px;font:400 11.3px/11.3px 'Liberation Mono','Courier New',monospace;color:#000;letter-spacing:1.219px;">0</span>
<span class="t" style="left:6.8px;top:114.71px;font:400 11.3px/11.3px 'Liberation Mono','Courier New',monospace;color:#808080;letter-spacing:1.219px;">8874</span>
<span class="t" style="left:58.0px;top:114.71px;font:400 11.3px/11.3px 'Liberation Mono','Courier New',monospace;color:#000;letter-spacing:1.219px;">0</span>
<span class="t" style="left:6.8px;top:130.71px;font:400 11.3px/11.3px 'Liberation Mono','Courier New',monospace;color:#808080;letter-spacing:1.219px;">8875</span>
<span class="t" style="left:58.0px;top:130.71px;font:400 11.3px/11.3px 'Liberation Mono','Courier New',monospace;color:#000;letter-spacing:1.220px;">0,0,51,-1</span>
<span class="t" style="left:6.8px;top:146.71px;font:400 11.3px/11.3px 'Liberation Mono','Courier New',monospace;color:#808080;letter-spacing:1.219px;">8876</span>
<span class="t" style="left:58.0px;top:146.71px;font:400 11.3px/11.3px 'Liberation Mono','Courier New',monospace;color:#000;letter-spacing:1.221px;">1,1,1,1,1,1,1,1,1,1,1,1,1,1,1,1,1,1,1,1,1,1,1,1,1,1,1,1,1,1</span>
<span class="t" style="left:6.8px;top:162.71px;font:400 11.3px/11.3px 'Liberation Mono','Courier New',monospace;color:#808080;letter-spacing:1.219px;">8877</span>
<span class="t" style="left:58.0px;top:162.71px;font:400 11.3px/11.3px 'Liberation Mono','Courier New',monospace;color:#000;letter-spacing:1.221px;">2,0,8191,0,255,2</span>
<span class="t" style="left:6.8px;top:178.71px;font:400 11.3px/11.3px 'Liberation Mono','Courier New',monospace;color:#808080;letter-spacing:1.219px;">8878</span>
<span class="t" style="left:58.0px;top:178.71px;font:400 11.3px/11.3px 'Liberation Mono','Courier New',monospace;color:#000;letter-spacing:1.220px;">5,0,0,0,0,1,0,0,0,0,0,0,1,0,5,0</span>
<span class="t" style="left:6.8px;top:194.71px;font:400 11.3px/11.3px 'Liberation Mono','Courier New',monospace;color:#808080;letter-spacing:1.219px;">8879</span>
<span class="t" style="left:58.0px;top:194.71px;font:400 11.3px/11.3px 'Liberation Mono','Courier New',monospace;color:#000;letter-spacing:1.220px;">0,0,0,0,0</span>
<span class="t" style="left:6.8px;top:210.71px;font:400 11.3px/11.3px 'Liberation Mono','Courier New',monospace;color:#808080;letter-spacing:1.219px;">8880</span>
<span class="t" style="left:58.0px;top:210.71px;font:400 11.3px/11.3px 'Liberation Mono','Courier New',monospace;color:#000;letter-spacing:1.220px;">0,0,0,0,0</span>
<span class="t" style="left:6.8px;top:226.71px;font:400 11.3px/11.3px 'Liberation Mono','Courier New',monospace;color:#808080;letter-spacing:1.219px;">8881</span>
<span class="t" style="left:58.0px;top:226.71px;font:400 11.3px/11.3px 'Liberation Mono','Courier New',monospace;color:#000;letter-spacing:1.221px;">-1,3,0,0,0,0,0,0,0,0,0,0,-1,-1,0,0,0,0,106</span>
<span class="t" style="left:6.8px;top:242.71px;font:400 11.3px/11.3px 'Liberation Mono','Courier New',monospace;color:#808080;letter-spacing:1.219px;">8882</span>
<span class="t" style="left:58.0px;top:242.71px;font:400 11.3px/11.3px 'Liberation Mono','Courier New',monospace;color:#000;letter-spacing:1.219px;">-1,CSet</span>
<span class="t" style="left:6.8px;top:258.71px;font:400 11.3px/11.3px 'Liberation Mono','Courier New',monospace;color:#808080;letter-spacing:1.219px;">8883</span>
<span class="t" style="left:58.0px;top:258.71px;font:400 11.3px/11.3px 'Liberation Mono','Courier New',monospace;color:#000;letter-spacing:1.219px;">-1,CSet</span>
<span class="t" style="left:6.8px;top:274.71px;font:400 11.3px/11.3px 'Liberation Mono','Courier New',monospace;color:#808080;letter-spacing:1.219px;">8884</span>
<span class="t" style="left:58.0px;top:274.71px;font:400 11.3px/11.3px 'Liberation Mono','Courier New',monospace;color:#000;letter-spacing:1.219px;">-1,CSet</span>
<span class="t" style="left:6.8px;top:290.71px;font:400 11.3px/11.3px 'Liberation Mono','Courier New',monospace;color:#808080;letter-spacing:1.219px;">8885</span>
<span class="t" style="left:58.0px;top:290.71px;font:400 11.3px/11.3px 'Liberation Mono','Courier New',monospace;color:#000;letter-spacing:1.221px;">-1,MCSet</span>
</div>
<div class="a" style="left:329px;top:41px;width:79px;height:35.7px;border:solid #000;border-width:4px 6px 6px 6px"></div>
<div class="a" style="left:329px;top:247px;width:83px;height:67.80000000000001px;border:solid #000;border-width:6px 6px 3.4px 6px"></div>
<svg class="a" style="left:0;top:0" width="1792" height="640"><line x1="364" y1="235.5" x2="496" y2="203" stroke="#ff0000" stroke-width="3.2"/><line x1="385.5" y1="242" x2="607" y2="222" stroke="#0000ff" stroke-width="3.2"/></svg>
<span class="t" style="left:413px;top:50.51px;font:700 17.6px/17.6px 'DejaVu Sans',Verdana,sans-serif;color:#000;letter-spacing:-0.021px;">=CW</span>
<span class="t" style="left:500px;top:200.50px;font:700 12px/12px 'DejaVu Sans',Verdana,sans-serif;color:#f80610;letter-spacing:-0.059px;"># CW O-chits in Reserve Pool</span>
<span class="t" style="left:614px;top:218.50px;font:700 12px/12px 'DejaVu Sans',Verdana,sans-serif;color:#0808e8;letter-spacing:-0.064px;"># CW Pilots in Reserve Pool</span>
<span class="t" style="left:420px;top:278.61px;font:700 12px/12px 'DejaVu Sans',Verdana,sans-serif;color:#000;letter-spacing:-0.051px;">=KEY (End of Section)</span>
<div class="a" style="left:333px;top:347.3px;width:61px;height:35.30000000000001px;border:solid #000;border-width:5.4px 6px 5.8px 6px"></div>
<div class="a" style="left:330.2px;top:555px;width:85.80000000000001px;height:70.79999999999995px;border:solid #000;border-width:6px"></div>
<svg class="a" style="left:0;top:0" width="1792" height="640"><line x1="366" y1="542" x2="487" y2="513" stroke="#ff0000" stroke-width="3.2"/><line x1="385" y1="548" x2="579" y2="534" stroke="#0000ff" stroke-width="3.2"/></svg>
<span class="t" style="left:403px;top:355.51px;font:700 17.6px/17.6px 'DejaVu Sans',Verdana,sans-serif;color:#000;letter-spacing:0.572px;">=USSR</span>
<span class="t" style="left:491px;top:506.50px;font:700 12px/12px 'DejaVu Sans',Verdana,sans-serif;color:#f80610;letter-spacing:-0.044px;"># USSR O-chits in Reserve Pool</span>
<span class="t" style="left:583px;top:528.50px;font:700 12px/12px 'DejaVu Sans',Verdana,sans-serif;color:#0808e8;letter-spacing:-0.077px;"># USSR Pilots in Reserve</span>
<span class="t" style="left:425px;top:591.61px;font:700 12px/12px 'DejaVu Sans',Verdana,sans-serif;color:#000;letter-spacing:-0.045px;">=Key (End of Section)</span>
<span class="t" style="left:19.5px;top:644.81px;font:400 12.2px/12.2px 'Liberation Sans',Arial,sans-serif;color:#999;letter-spacing:-0.004px;">WinMerge - [pre-edit.GAM - post-edit-1.GAM]</span>
<svg class="a" style="left:-4.5px;top:641px" width="18" height="17" viewBox="-5 0 18 17"><path d="M3.6 1.6 H9.4 L12.4 4.4 V15.4 H3.6 Z" fill="#fff" stroke="#2a7ad4" stroke-width="1.3"/><rect x="5" y="3" width="3.4" height="1.1" fill="#3a86dc"/><rect x="4.6" y="6" width="7" height="2.3" fill="#f6c21c"/><rect x="4.6" y="9.2" width="7" height="2.3" fill="#f6c21c"/><rect x="5" y="12.7" width="6" height="1.1" fill="#3a86dc"/><path d="M-5 6.4 H0.8 V3.6 L6.6 8.6 L0.8 13.6 V10.8 H-5 Z" fill="#ec7a1c" stroke="#a02c10" stroke-width="0.9"/></svg>
<div class="a" style="left:1691.5px;top:650px;width:11px;height:1px;background:#8a8a8a;"></div>
<div class="a" style="left:1737px;top:645px;width:10px;height:10px;border:1px solid #8a8a8a"></div>
<svg class="a" style="left:1783px;top:645px" width="10" height="10"><path d="M0.5 0.5 L10 10 M0.5 9.5 L10 0" stroke="#8a8a8a" stroke-width="1" fill="none"/></svg>
<svg class="a" style="left:-1.5px;top:666.5px" width="13" height="17" viewBox="0 0 13 17"><path d="M1.5 1.5 H8.5 L11.5 4.5 V15.5 H1.5 Z" fill="#fff" stroke="#6a50b8" stroke-width="1.2"/><rect x="3" y="4" width="5" height="1.3" fill="#e03030"/><rect x="3" y="6.6" width="7" height="1.3" fill="#e03030"/><rect x="3" y="9.2" width="7" height="1.3" fill="#e03030"/><rect x="6" y="11.8" width="4" height="1.3" fill="#e03030"/><circle cx="3.2" cy="12.8" r="3.2" fill="#e02020"/><rect x="2.6" y="10.6" width="1.3" height="2.8" fill="#fff"/><rect x="2.6" y="14" width="1.3" height="1.2" fill="#fff"/></svg>
<span class="t" style="left:20.5px;top:670.41px;font:400 11.8px/11.8px 'Liberation Sans',Arial,sans-serif;color:#4a4a4a;letter-spacing:0.496px;">File</span>
<span class="t" style="left:52px;top:670.41px;font:400 11.8px/11.8px 'Liberation Sans',Arial,sans-serif;color:#4a4a4a;letter-spacing:0.543px;">Edit</span>
<span class="t" style="left:86.5px;top:670.41px;font:400 11.8px/11.8px 'Liberation Sans',Arial,sans-serif;color:#4a4a4a;letter-spacing:0.035px;">View</span>
<span class="t" style="left:125.5px;top:670.41px;font:400 11.8px/11.8px 'Liberation Sans',Arial,sans-serif;color:#4a4a4a;letter-spacing:0.309px;">Merge</span>
<span class="t" style="left:173.5px;top:670.41px;font:400 11.8px/11.8px 'Liberation Sans',Arial,sans-serif;color:#4a4a4a;letter-spacing:-0.009px;">Tools</span>
<span class="t" style="left:214px;top:670.41px;font:400 11.8px/11.8px 'Liberation Sans',Arial,sans-serif;color:#4a4a4a;letter-spacing:0.042px;">Plugins</span>
<span class="t" style="left:266.5px;top:670.41px;font:400 11.8px/11.8px 'Liberation Sans',Arial,sans-serif;color:#4a4a4a;letter-spacing:0.422px;">Window</span>
<span class="t" style="left:325px;top:670.41px;font:400 11.8px/11.8px 'Liberation Sans',Arial,sans-serif;color:#4a4a4a;letter-spacing:0.184px;">Help</span>
<div class="a" style="left:0px;top:684.5px;width:1792px;height:1px;background:#e8e8e8;"></div>
<div class="a" style="left:1754px;top:667px;width:17.8px;height:19px;background:#e8e8e8;"></div>
<div class="a" style="left:1759px;top:677.8px;width:6.2px;height:2.2px;background:#6a8aac;"></div>
<div class="a" style="left:1773px;top:667px;width:18px;height:19px;background:#e8e8e8;"></div>
<div class="a" style="left:1778px;top:674.5px;width:6px;height:5.5px;border:1px solid #6a8aac;border-top-width:2px"></div>
<div class="a" style="left:1780.5px;top:672px;width:6px;height:5.5px;border:1px solid #6a8aac;border-top-width:2px;border-left:none;border-bottom:none"></div>
<div class="a" style="left:0px;top:709px;width:1792px;height:1px;background:#e0e0e0;"></div>
<div class="a" style="left:0px;top:710px;width:1792px;height:26px;background:#f0f0f0;"></div>
<svg class="a" style="left:-4px;top:714px" width="18" height="17" viewBox="-5 0 18 17"><path d="M3.6 1.6 H9.4 L12.4 4.4 V15.4 H3.6 Z" fill="#fff" stroke="#2a7ad4" stroke-width="1.3"/><rect x="5" y="3" width="3.4" height="1.1" fill="#3a86dc"/><rect x="4.6" y="6" width="7" height="2.3" fill="#f6c21c"/><rect x="4.6" y="9.2" width="7" height="2.3" fill="#f6c21c"/><rect x="5" y="12.7" width="6" height="1.1" fill="#3a86dc"/><path d="M-5 6.4 H0.8 V3.6 L6.6 8.6 L0.8 13.6 V10.8 H-5 Z" fill="#ec7a1c" stroke="#a02c10" stroke-width="0.9"/></svg>
<span class="t" style="left:15.2px;top:717.81px;font:400 11.7px/11.7px 'Liberation Sans',Arial,sans-serif;color:#000;letter-spacing:-0.203px;">Select Files or Folders</span>
<div class="a" style="left:135px;top:711px;width:205px;height:25px;background:#fff;border:1px solid #d0d0d0;border-bottom:none"></div>
<svg class="a" style="left:142.5px;top:714.5px" width="13" height="17" viewBox="0 0 13 17"><path d="M1.5 1.5 H8.5 L11.5 4.5 V15.5 H1.5 Z" fill="#fff" stroke="#6a50b8" stroke-width="1.2"/><rect x="3" y="4" width="5" height="1.3" fill="#e03030"/><rect x="3" y="6.6" width="7" height="1.3" fill="#e03030"/><rect x="3" y="9.2" width="7" height="1.3" fill="#e03030"/><rect x="6" y="11.8" width="4" height="1.3" fill="#e03030"/><circle cx="3.2" cy="12.8" r="3.2" fill="#e02020"/><rect x="2.6" y="10.6" width="1.3" height="2.8" fill="#fff"/><rect x="2.6" y="14" width="1.3" height="1.2" fill="#fff"/></svg>
<span class="t" style="left:159px;top:717.81px;font:400 11.7px/11.7px 'Liberation Sans',Arial,sans-serif;color:#000;letter-spacing:0.234px;">pre-edit.GAM - post-edit-1.GAM</span>
<svg class="a" style="left:7px;top:689px" width="16" height="16" viewBox="0 0 16 16"><defs><linearGradient id="pg" x1="0" y1="0" x2="1" y2="1"><stop offset="0" stop-color="#f4f8ff"/><stop offset="1" stop-color="#a8c4f0"/></linearGradient></defs><path d="M5.5 1.5 H11.5 L13.5 3.5 V13 H5.5 Z" fill="url(#pg)" stroke="#7c98d8" stroke-width="0.9"/><path d="M1.5 2.5 H8 L10.5 5 V15 H1.5 Z" fill="url(#pg)" stroke="#6c8cd4" stroke-width="0.9"/></svg>
<svg class="a" style="left:29px;top:695.8px" width="8" height="5"><path d="M0 0 H8 L4 4.5 Z" fill="#111"/></svg>
<svg class="a" style="left:45px;top:689px" width="16" height="16" viewBox="0 0 16 16"><path d="M1 3.5 Q1 2.5 2 2.5 H6 L7.5 4.5 H13 Q14 4.5 14 5.5 V13 Q14 14 13 14 H2 Q1 14 1 13 Z" fill="#e0cc30" stroke="#9a8a10"/><path d="M1.5 7 H15 V13.5 Q15 14.5 14 14.5 H2.5 Q1.5 14.5 1.5 13.5 Z" fill="#f4e860" stroke="#9a8a10"/></svg>
<svg class="a" style="left:68px;top:695.8px" width="8" height="5"><path d="M0 0 H8 L4 4.5 Z" fill="#111"/></svg>
<svg class="a" style="left:85px;top:689px" width="16" height="16" viewBox="0 0 16 16"><rect x="1" y="1.5" width="14" height="13" fill="#a8a8a8" stroke="#909090"/><rect x="3.5" y="2" width="9" height="5" fill="#e8e8e8"/><rect x="4" y="9.5" width="8" height="5" fill="#c8c8c8"/><rect x="5" y="10.5" width="2" height="3" fill="#909090"/></svg>
<svg class="a" style="left:107px;top:695.8px" width="8" height="5"><path d="M0 0 H8 L4 4.5 Z" fill="#808080"/></svg>
<div class="a" style="left:119.9px;top:688px;width:1.2px;height:20px;background:#989898;"></div>
<svg class="a" style="left:128px;top:689px" width="16" height="16" viewBox="0 0 16 16"><path d="M1 2.5 L1 10 L8.5 10 L5.9 7.4 Q8 5.6 10.4 6.6 Q13 8 11.2 13 L14.6 13 Q17 6.5 12 3.6 Q7.6 1.6 3.6 5.2 Z" fill="#cfcfcf" stroke="#a4a4a4" stroke-width="0.9"/></svg>
<svg class="a" style="left:152px;top:689px" width="16" height="16" viewBox="0 0 16 16"><g transform="translate(16,0) scale(-1,1)"><path d="M1 2.5 L1 10 L8.5 10 L5.9 7.4 Q8 5.6 10.4 6.6 Q13 8 11.2 13 L14.6 13 Q17 6.5 12 3.6 Q7.6 1.6 3.6 5.2 Z" fill="#cfcfcf" stroke="#a4a4a4" stroke-width="0.9"/></g></svg>
<div class="a" style="left:173.9px;top:688px;width:1.2px;height:20px;background:#989898;"></div>
<svg class="a" style="left:182px;top:689px" width="16" height="16" viewBox="0 0 16 16"><rect x="0" y="2" width="16" height="5" fill="#f4e000"/><rect x="0" y="9" width="16" height="5" fill="#e81010"/><rect x="5.5" y="0.5" width="5" height="15" fill="none" stroke="#202020" stroke-width="1"/></svg>
<div class="a" style="left:203.9px;top:688px;width:1.2px;height:20px;background:#989898;"></div>
<svg class="a" style="left:212px;top:689px" width="16" height="16" viewBox="0 0 16 16"><rect x="0" y="11" width="8" height="4" fill="#e81010"/><rect x="8" y="11" width="8" height="4" fill="#f8e000"/><rect x="8" y="9" width="8" height="2" fill="#f8e000" opacity="0"/><path d="M5 1 H11 V6 H14.5 L8 13 L1.5 6 H5 Z" fill="#20d020" stroke="#087008" stroke-width="1"/></svg>
<svg class="a" style="left:236px;top:689px" width="16" height="16" viewBox="0 0 16 16"><rect x="0" y="1" width="8" height="4" fill="#e81010"/><rect x="8" y="1" width="8" height="4" fill="#f8e000"/><path d="M5 15 H11 V10 H14.5 L8 3 L1.5 10 H5 Z" fill="#20d020" stroke="#087008" stroke-width="1"/></svg>
<div class="a" style="left:257.9px;top:688px;width:1.2px;height:20px;background:#989898;"></div>
<svg class="a" style="left:266px;top:689px" width="16" height="16" viewBox="0 0 16 16"><rect x="0" y="11" width="8" height="4" fill="#b0b0b0"/><rect x="8" y="11" width="8" height="4" fill="#d4d4d4"/><path d="M5 1 H11 V6 H14.5 L8 13 L1.5 6 H5 Z" fill="#c4c4c4" stroke="#9a9a9a" stroke-width="1"/></svg>
<svg class="a" style="left:290px;top:689px" width="16" height="16" viewBox="0 0 16 16"><rect x="0" y="1" width="8" height="4" fill="#b0b0b0"/><rect x="8" y="1" width="8" height="4" fill="#d4d4d4"/><path d="M5 15 H11 V10 H14.5 L8 3 L1.5 10 H5 Z" fill="#c4c4c4" stroke="#9a9a9a" stroke-width="1"/></svg>
<div class="a" style="left:311.9px;top:688px;width:1.2px;height:20px;background:#989898;"></div>
<svg class="a" style="left:320px;top:689px" width="16" height="16" viewBox="0 0 16 16"><rect x="0" y="1" width="8" height="4" fill="#e81010"/><rect x="8" y="1" width="8" height="4" fill="#f8e000"/><path d="M8 3 L14.5 9 H11 L8 6.3 L5 9 H1.5 Z M8 8.5 L14.5 14.5 H1.5 Z" fill="#20d020" stroke="#087008" stroke-width="0.9"/></svg>
<svg class="a" style="left:344px;top:689px" width="16" height="16" viewBox="0 0 16 16"><rect x="0" y="6" width="16" height="4" fill="#d8d8d8"/><path d="M2.5 1.5 H13.5 L8 8 L13.5 14.5 H2.5 L8 8 Z" fill="#c4c4c4" stroke="#9a9a9a"/></svg>
<svg class="a" style="left:368px;top:689px" width="16" height="16" viewBox="0 0 16 16"><rect x="0" y="11" width="8" height="4" fill="#e81010"/><rect x="8" y="11" width="8" height="4" fill="#f8e000"/><rect x="8" y="9" width="8" height="2" fill="#f8e000" opacity="0"/><path d="M8 13 L14.5 7 H11 L8 9.7 L5 7 H1.5 Z M8 7.5 L14.5 1.5 H1.5 Z" fill="#20d020" stroke="#087008" stroke-width="0.9"/></svg>
<div class="a" style="left:389.9px;top:688px;width:1.2px;height:20px;background:#989898;"></div>
<svg class="a" style="left:398px;top:689px" width="16" height="16" viewBox="0 0 16 16"><rect x="8" y="6" width="8" height="4" fill="#dcdcdc"/><path d="M1.5 5.5 H5 V1.5 L12 8 L5 14.5 V10.5 H1.5 Z" fill="#c4c4c4" stroke="#9a9a9a"/></svg>
<svg class="a" style="left:422px;top:689px" width="16" height="16" viewBox="0 0 16 16"><rect x="0" y="6" width="8" height="4" fill="#dcdcdc"/><path d="M14.5 5.5 H11 V1.5 L4 8 L11 14.5 V10.5 H14.5 Z" fill="#c4c4c4" stroke="#9a9a9a"/></svg>
<div class="a" style="left:443.9px;top:688px;width:1.2px;height:20px;background:#989898;"></div>
<svg class="a" style="left:452px;top:689px" width="16" height="16" viewBox="0 0 16 16"><path d="M1.5 5.5 H4 V1.5 L11 8 L4 14.5 V10.5 H1.5 Z" fill="#c4c4c4" stroke="#9a9a9a"/><path d="M9 10 H14 V12 H15.5 L11.5 15.5 L7.5 12 H9 Z" fill="#d8d8d8" stroke="#9a9a9a" stroke-width="0.8"/></svg>
<svg class="a" style="left:476px;top:689px" width="16" height="16" viewBox="0 0 16 16"><path d="M14.5 5.5 H12 V1.5 L5 8 L12 14.5 V10.5 H14.5 Z" fill="#c4c4c4" stroke="#9a9a9a"/><path d="M2 10 H7 V12 H8.5 L4.5 15.5 L0.5 12 H2 Z" fill="#d8d8d8" stroke="#9a9a9a" stroke-width="0.8"/></svg>
<div class="a" style="left:497.9px;top:688px;width:1.2px;height:20px;background:#989898;"></div>
<svg class="a" style="left:506px;top:689px" width="16" height="16" viewBox="0 0 16 16"><rect x="0.8" y="0.8" width="7.5" height="14.4" fill="#e81010" stroke="#a00000"/><rect x="8.3" y="0.8" width="7" height="14.4" fill="#f8e820"/><path d="M2.5 5.5 H7 V2.5 L13.5 8 L7 13.5 V10.5 H2.5 Z" fill="#1878f0" stroke="#0840a0" stroke-width="0.9"/></svg>
<svg class="a" style="left:530px;top:689px" width="16" height="16" viewBox="0 0 16 16"><rect x="7.7" y="0.8" width="7.5" height="14.4" fill="#e81010" stroke="#a00000"/><rect x="0.7" y="0.8" width="7" height="14.4" fill="#f8e820"/><path d="M13.5 5.5 H9 V2.5 L2.5 8 L9 13.5 V10.5 H13.5 Z" fill="#1878f0" stroke="#0840a0" stroke-width="0.9"/></svg>
<div class="a" style="left:551.9px;top:688px;width:1.2px;height:20px;background:#989898;"></div>
<svg class="a" style="left:560px;top:689px" width="16" height="16" viewBox="0 0 16 16"><rect x="0.5" y="1.5" width="3.5" height="13" fill="#d0d0d0"/><rect x="12" y="1.5" width="3.5" height="13" fill="#d0d0d0"/><path d="M3 2.5 L8 8 L3 13.5 Z M13 2.5 L8 8 L13 13.5 Z" fill="#c4c4c4" stroke="#9a9a9a"/></svg>
<div class="a" style="left:581.9px;top:688px;width:1.2px;height:20px;background:#989898;"></div>
<svg class="a" style="left:590px;top:689px" width="16" height="16" viewBox="0 0 16 16"><rect x="1" y="1.5" width="2" height="13" fill="#a8a8a8"/><path d="M14.5 5.5 H10 V2 L3.5 8 L10 14 V10.5 H14.5 Z" fill="#c4c4c4" stroke="#9a9a9a"/></svg>
<svg class="a" style="left:614px;top:689px" width="16" height="16" viewBox="0 0 16 16"><path d="M14.5 5.5 H9 V2 L2.5 8 L9 14 V10.5 H14.5 Z" fill="#c4c4c4" stroke="#9a9a9a"/><rect x="1" y="2" width="3" height="2" fill="#e0e0e0"/></svg>
<svg class="a" style="left:639px;top:689px" width="16" height="16" viewBox="0 0 16 16"><path d="M1.5 5.5 H7 V2 L13.5 8 L7 14 V10.5 H1.5 Z" fill="#c4c4c4" stroke="#9a9a9a"/><rect x="12" y="12" width="3" height="2" fill="#e0e0e0"/></svg>
<svg class="a" style="left:663px;top:689px" width="16" height="16" viewBox="0 0 16 16"><rect x="13" y="1.5" width="2" height="13" fill="#a8a8a8"/><path d="M1.5 5.5 H6 V2 L12.5 8 L6 14 V10.5 H1.5 Z" fill="#c4c4c4" stroke="#9a9a9a"/></svg>
<div class="a" style="left:683.9px;top:688px;width:1.2px;height:20px;background:#989898;"></div>
<svg class="a" style="left:693px;top:689.5px" width="16" height="16" viewBox="0 0 16 16"><defs><linearGradient id="og" x1="0" y1="0" x2="0.25" y2="1"><stop offset="0" stop-color="#d04a44"/><stop offset="0.5" stop-color="#ec7a3a"/><stop offset="1" stop-color="#fce020"/></linearGradient></defs><rect x="0.6" y="0.6" width="14.2" height="14.2" rx="1.2" fill="url(#og)" stroke="#c82818" stroke-width="1.1"/><path d="M3.8 11.8 L11.6 4" stroke="#fff" stroke-width="2.4" stroke-linecap="round"/><circle cx="3.6" cy="12" r="2.3" fill="#fff"/><circle cx="11.8" cy="3.8" r="2.3" fill="#fff"/><circle cx="2.9" cy="12.7" r="0.9" fill="#f0b020"/><path d="M12 2.2 L13.8 4 L14.6 1.4 Z" fill="#d85a50"/></svg>
<svg class="a" style="left:716px;top:695.8px" width="8" height="5"><path d="M0 0 H8 L4 4.5 Z" fill="#111"/></svg>
<div class="a" style="left:728.9px;top:688px;width:1.2px;height:20px;background:#989898;"></div>
<svg class="a" style="left:737px;top:689px" width="16" height="16" viewBox="0 0 16 16"><path d="M2.8 11.5 A5.6 5.6 0 0 1 8.5 3.2" fill="none" stroke="#0c3c9c" stroke-width="4.2"/><path d="M2.8 11.5 A5.6 5.6 0 0 1 8.5 3.2" fill="none" stroke="#2a80f0" stroke-width="2.6"/><path d="M7.5 0.3 L13 4.6 L7 7.2 Z" fill="#2a80f0" stroke="#0c3c9c" stroke-width="0.8"/><path d="M13.2 4.8 A5.6 5.6 0 0 1 7.5 12.9" fill="none" stroke="#0c7c10" stroke-width="4.2"/><path d="M13.2 4.8 A5.6 5.6 0 0 1 7.5 12.9" fill="none" stroke="#30d030" stroke-width="2.6"/><path d="M8.5 15.7 L3 11.4 L9 8.8 Z" fill="#30d030" stroke="#0c7c10" stroke-width="0.8"/></svg>
<div class="a" style="left:758.9px;top:688px;width:1.2px;height:20px;background:#989898;"></div>
<div class="a" style="left:0px;top:736px;width:110px;height:416px;background:#e8e8f4;"></div>
<div class="a" style="left:0px;top:738px;width:90px;height:13.5px;background:linear-gradient(90deg,#b8cce4,#d4e4f4);"></div>
<span class="t" style="left:-4.2px;top:738.61px;font:400 11.4px/11.4px 'Liberation Sans',Arial,sans-serif;color:#000;letter-spacing:-0.180px;">Location Pane</span>
<svg class="a" style="left:94.5px;top:740.5px" width="8" height="8"><path d="M1.2 1.2 L6.6 6.6 M6.6 1.2 L1.2 6.6" stroke="#000" stroke-width="1.4"/></svg>
<div class="a" style="left:0px;top:761px;width:103px;height:84px;background:linear-gradient(90deg,#c2c2e2,#d4d4e8 14px,#d8d8e8 50%,#cacae4);"></div>
<div class="a" style="left:14px;top:757px;width:25px;height:88px;background:#f0f0f4;"></div>
<div class="a" style="left:14px;top:757px;width:25px;height:4px;background:#fff;"></div>
<div class="a" style="left:14px;top:769px;width:25px;height:12px;background:#e6c000;"></div>
<div class="a" style="left:14px;top:801px;width:25px;height:8px;background:#e6c000;"></div>
<div class="a" style="left:14px;top:829px;width:25px;height:8px;background:#e6c000;"></div>
<div class="a" style="left:59px;top:757px;width:25px;height:88px;background:#f0f0f4;"></div>
<div class="a" style="left:59px;top:757px;width:25px;height:4px;background:#fff;"></div>
<div class="a" style="left:59px;top:769px;width:25px;height:12px;background:#e6c000;"></div>
<div class="a" style="left:59px;top:801px;width:25px;height:8px;background:#e6c000;"></div>
<div class="a" style="left:59px;top:829px;width:25px;height:8px;background:#e6c000;"></div>
<div class="a" style="left:110px;top:735.5px;width:1682px;height:20.5px;background:#bccbdc;"></div>
<div class="a" style="left:110px;top:735.5px;width:838px;height:20.5px;background:#b9c9db;"></div>
<span class="t" style="left:117.2px;top:739.40px;font:400 11.6px/11.6px 'Liberation Sans',Arial,sans-serif;color:#000;letter-spacing:0.122px;">C:\Program Files (x86)\Matrix Games\World in Flames\Scenarios\Global War\Saved Games\pre-edit.GAM</span>
<div class="a" style="left:110px;top:756px;width:838px;height:396px;background:#fff;overflow:hidden">
<div class="a" style="left:0px;top:0px;width:54px;height:396px;background:#f0f0f0;"></div>
<span class="t" style="left:43.4px;top:5.00px;font:400 14px/14px 'Liberation Mono','Courier New',monospace;color:#000;letter-spacing:1.594px;">2</span>
<span class="t" style="left:58.199999999999996px;top:5.00px;font:400 14px/14px 'Liberation Mono','Courier New',monospace;color:#000;letter-spacing:1.598px;">GW2021MAY,</span>
<span class="t" style="left:43.4px;top:24.00px;font:400 14px/14px 'Liberation Mono','Courier New',monospace;color:#000;letter-spacing:1.594px;">3</span>
<span class="t" style="left:58.199999999999996px;top:24.00px;font:400 14px/14px 'Liberation Mono','Courier New',monospace;color:#000;letter-spacing:1.598px;">May/Jun 1945,7,Factory Destruction,None,Japan,USSR,</span>
<div class="a" style="left:57px;top:40px;width:781px;height:19px;background:#efcb05;"></div>
<div class="a" style="left:67px;top:40px;width:50px;height:19px;background:#f1e2ad;"></div>
<div class="a" style="left:207px;top:40px;width:10px;height:19px;background:#f1e2ad;"></div>
<div class="a" style="left:297px;top:40px;width:10px;height:19px;background:#f1e2ad;"></div>
<div class="a" style="left:317px;top:40px;width:20px;height:19px;background:#f1e2ad;"></div>
<div class="a" style="left:347px;top:40px;width:10px;height:19px;background:#f1e2ad;"></div>
<span class="t" style="left:43.4px;top:43.00px;font:400 14px/14px 'Liberation Mono','Courier New',monospace;color:#000;letter-spacing:1.594px;">4</span>
<span class="t" style="left:58.199999999999996px;top:43.00px;font:400 14px/14px 'Liberation Mono','Courier New',monospace;color:#000;letter-spacing:1.599px;">|Thursday, Oct 6, 2022 12:23 pm|</span>
<div class="a" style="left:57px;top:59px;width:781px;height:19px;background:#efcb05;"></div>
<div class="a" style="left:227px;top:59px;width:10px;height:19px;background:#f1e2ad;"></div>
<div class="a" style="left:317px;top:59px;width:10px;height:19px;background:#f1e2ad;"></div>
<span class="t" style="left:43.4px;top:62.00px;font:400 14px/14px 'Liberation Mono','Courier New',monospace;color:#000;letter-spacing:1.594px;">5</span>
<span class="t" style="left:58.199999999999996px;top:62.00px;font:400 14px/14px 'Liberation Mono','Courier New',monospace;color:#000;letter-spacing:1.598px;">189782319,44660435,44562713,0,0,Halfscreen,|C:\Program Files (x86)\Matrix Games</span>
<span class="t" style="left:43.4px;top:81.00px;font:400 14px/14px 'Liberation Mono','Courier New',monospace;color:#000;letter-spacing:1.594px;">6</span>
<span class="t" style="left:58.199999999999996px;top:81.00px;font:400 14px/14px 'Liberation Mono','Courier New',monospace;color:#000;letter-spacing:1.599px;">-1,-1,-1,-1,-1,-1,-1,-1,-1,-1,-1,-1,-1,0,0,0,-1,0,0,0,0,0,-1,-1,-1,-1,-1,-1,-1,-1,-1</span>
<span class="t" style="left:43.4px;top:100.00px;font:400 14px/14px 'Liberation Mono','Courier New',monospace;color:#000;letter-spacing:1.594px;">7</span>
<span class="t" style="left:58.199999999999996px;top:100.00px;font:400 14px/14px 'Liberation Mono','Courier New',monospace;color:#000;letter-spacing:1.597px;">0,0,0</span>
<span class="t" style="left:43.4px;top:119.00px;font:400 14px/14px 'Liberation Mono','Courier New',monospace;color:#000;letter-spacing:1.594px;">8</span>
<span class="t" style="left:58.199999999999996px;top:119.00px;font:400 14px/14px 'Liberation Mono','Courier New',monospace;color:#000;letter-spacing:1.594px;">34</span>
<span class="t" style="left:13.4px;top:138.00px;font:400 14px/14px 'Liberation Mono','Courier New',monospace;color:#000;letter-spacing:1.598px;">8878</span>
<span class="t" style="left:58.199999999999996px;top:138.00px;font:400 14px/14px 'Liberation Mono','Courier New',monospace;color:#000;letter-spacing:1.598px;">5,0,0,0,0,1,0,0,0,0,0,0,1,0,5,0</span>
<span class="t" style="left:13.4px;top:157.00px;font:400 14px/14px 'Liberation Mono','Courier New',monospace;color:#000;letter-spacing:1.598px;">8879</span>
<span class="t" style="left:58.199999999999996px;top:157.00px;font:400 14px/14px 'Liberation Mono','Courier New',monospace;color:#000;letter-spacing:1.597px;">0,0,0,0,0</span>
<span class="t" style="left:13.4px;top:176.00px;font:400 14px/14px 'Liberation Mono','Courier New',monospace;color:#000;letter-spacing:1.598px;">8880</span>
<span class="t" style="left:58.199999999999996px;top:176.00px;font:400 14px/14px 'Liberation Mono','Courier New',monospace;color:#000;letter-spacing:1.597px;">0,0,0,0,0</span>
<div class="a" style="left:57px;top:192px;width:781px;height:19px;background:#efcb05;"></div>
<div class="a" style="left:87px;top:192px;width:10px;height:19px;background:#f1e2ad;"></div>
<div class="a" style="left:107px;top:192px;width:10px;height:19px;background:#f1e2ad;"></div>
<span class="t" style="left:13.4px;top:195.00px;font:400 14px/14px 'Liberation Mono','Courier New',monospace;color:#000;letter-spacing:1.598px;">8881</span>
<span class="t" style="left:58.199999999999996px;top:195.00px;font:400 14px/14px 'Liberation Mono','Courier New',monospace;color:#000;letter-spacing:1.599px;">-1,3,0,0,0,0,0,0,0,0,0,0,-1,-1,0,0,0,0,106</span>
<span class="t" style="left:13.4px;top:214.00px;font:400 14px/14px 'Liberation Mono','Courier New',monospace;color:#000;letter-spacing:1.598px;">8882</span>
<span class="t" style="left:58.199999999999996px;top:214.00px;font:400 14px/14px 'Liberation Mono','Courier New',monospace;color:#000;letter-spacing:1.598px;">-1,CSet</span>
<span class="t" style="left:13.4px;top:233.00px;font:400 14px/14px 'Liberation Mono','Courier New',monospace;color:#000;letter-spacing:1.598px;">8883</span>
<span class="t" style="left:58.199999999999996px;top:233.00px;font:400 14px/14px 'Liberation Mono','Courier New',monospace;color:#000;letter-spacing:1.598px;">-1,CSet</span>
<span class="t" style="left:13.4px;top:252.00px;font:400 14px/14px 'Liberation Mono','Courier New',monospace;color:#000;letter-spacing:1.598px;">8884</span>
<span class="t" style="left:58.199999999999996px;top:252.00px;font:400 14px/14px 'Liberation Mono','Courier New',monospace;color:#000;letter-spacing:1.598px;">-1,CSet</span>
<span class="t" style="left:13.4px;top:271.00px;font:400 14px/14px 'Liberation Mono','Courier New',monospace;color:#000;letter-spacing:1.598px;">9823</span>
<span class="t" style="left:58.199999999999996px;top:271.00px;font:400 14px/14px 'Liberation Mono','Courier New',monospace;color:#000;letter-spacing:1.598px;">3,0,0,0,0,0,0,0,0,0,0,1,0,0,2,0</span>
<span class="t" style="left:13.4px;top:290.00px;font:400 14px/14px 'Liberation Mono','Courier New',monospace;color:#000;letter-spacing:1.598px;">9824</span>
<span class="t" style="left:58.199999999999996px;top:290.00px;font:400 14px/14px 'Liberation Mono','Courier New',monospace;color:#000;letter-spacing:1.597px;">0,0,0,0,0</span>
<span class="t" style="left:13.4px;top:309.00px;font:400 14px/14px 'Liberation Mono','Courier New',monospace;color:#000;letter-spacing:1.598px;">9825</span>
<span class="t" style="left:58.199999999999996px;top:309.00px;font:400 14px/14px 'Liberation Mono','Courier New',monospace;color:#000;letter-spacing:1.597px;">0,0,0,0,0</span>
<div class="a" style="left:57px;top:325px;width:781px;height:19px;background:#efcb05;"></div>
<div class="a" style="left:87px;top:325px;width:10px;height:19px;background:#f1e2ad;"></div>
<span class="t" style="left:13.4px;top:328.00px;font:400 14px/14px 'Liberation Mono','Courier New',monospace;color:#000;letter-spacing:1.598px;">9826</span>
<span class="t" style="left:58.199999999999996px;top:328.00px;font:400 14px/14px 'Liberation Mono','Courier New',monospace;color:#000;letter-spacing:1.598px;">-1,1,1,0,0,0,0,0,0,0,0,0,-1,-1,0,0,0,0,99</span>
<span class="t" style="left:13.4px;top:347.00px;font:400 14px/14px 'Liberation Mono','Courier New',monospace;color:#000;letter-spacing:1.598px;">9827</span>
<span class="t" style="left:58.199999999999996px;top:347.00px;font:400 14px/14px 'Liberation Mono','Courier New',monospace;color:#000;letter-spacing:1.598px;">-1,CSet</span>
<span class="t" style="left:13.4px;top:366.00px;font:400 14px/14px 'Liberation Mono','Courier New',monospace;color:#000;letter-spacing:1.598px;">9828</span>
<span class="t" style="left:58.199999999999996px;top:366.00px;font:400 14px/14px 'Liberation Mono','Courier New',monospace;color:#000;letter-spacing:1.598px;">-1,CSet</span>
<span class="t" style="left:13.4px;top:385.00px;font:400 14px/14px 'Liberation Mono','Courier New',monospace;color:#000;letter-spacing:1.598px;">9829</span>
<span class="t" style="left:58.199999999999996px;top:385.00px;font:400 14px/14px 'Liberation Mono','Courier New',monospace;color:#000;letter-spacing:1.598px;">-1,CSet</span>
<div class="a" style="left:2px;top:134px;width:838px;height:1px;background:#000;"></div>
<div class="a" style="left:2px;top:267px;width:838px;height:1px;background:#000;"></div>
</div>
<div class="a" style="left:948px;top:756px;width:7px;height:396px;background:#f0f0f0;"></div>
<div class="a" style="left:952px;top:735.5px;width:840px;height:20.5px;background:#b9c9db;"></div>
<span class="t" style="left:958.2px;top:739.40px;font:400 11.6px/11.6px 'Liberation Sans',Arial,sans-serif;color:#000;letter-spacing:0.134px;">C:\Program Files (x86)\Matrix Games\World in Flames\Scenarios\Global War\Saved Games\post-edit-1.GAM</span>
<div class="a" style="left:952px;top:756px;width:840px;height:396px;background:#fff;overflow:hidden">
<div class="a" style="left:0px;top:0px;width:55px;height:396px;background:#f0f0f0;"></div>
<span class="t" style="left:44.4px;top:5.00px;font:400 14px/14px 'Liberation Mono','Courier New',monospace;color:#000;letter-spacing:1.594px;">2</span>
<span class="t" style="left:59.199999999999996px;top:5.00px;font:400 14px/14px 'Liberation Mono','Courier New',monospace;color:#000;letter-spacing:1.598px;">GW2021MAY,</span>
<span class="t" style="left:44.4px;top:24.00px;font:400 14px/14px 'Liberation Mono','Courier New',monospace;color:#000;letter-spacing:1.594px;">3</span>
<span class="t" style="left:59.199999999999996px;top:24.00px;font:400 14px/14px 'Liberation Mono','Courier New',monospace;color:#000;letter-spacing:1.598px;">May/Jun 1945,7,Factory Destruction,None,Japan,USSR,</span>
<div class="a" style="left:58px;top:40px;width:782px;height:19px;background:#efcb05;"></div>
<div class="a" style="left:68px;top:40px;width:30px;height:19px;background:#f1e2ad;"></div>
<div class="a" style="left:188px;top:40px;width:10px;height:19px;background:#f1e2ad;"></div>
<div class="a" style="left:278px;top:40px;width:10px;height:19px;background:#f1e2ad;"></div>
<div class="a" style="left:298px;top:40px;width:20px;height:19px;background:#f1e2ad;"></div>
<div class="a" style="left:328px;top:40px;width:10px;height:19px;background:#f1e2ad;"></div>
<span class="t" style="left:44.4px;top:43.00px;font:400 14px/14px 'Liberation Mono','Courier New',monospace;color:#000;letter-spacing:1.594px;">4</span>
<span class="t" style="left:59.199999999999996px;top:43.00px;font:400 14px/14px 'Liberation Mono','Courier New',monospace;color:#000;letter-spacing:1.598px;">|Friday, Oct 7, 2022 11:49 am|</span>
<div class="a" style="left:58px;top:59px;width:782px;height:19px;background:#efcb05;"></div>
<div class="a" style="left:228px;top:59px;width:10px;height:19px;background:#f1e2ad;"></div>
<div class="a" style="left:318px;top:59px;width:10px;height:19px;background:#f1e2ad;"></div>
<span class="t" style="left:44.4px;top:62.00px;font:400 14px/14px 'Liberation Mono','Courier New',monospace;color:#000;letter-spacing:1.594px;">5</span>
<span class="t" style="left:59.199999999999996px;top:62.00px;font:400 14px/14px 'Liberation Mono','Courier New',monospace;color:#000;letter-spacing:1.598px;">189782319,44660437,44562715,0,0,Halfscreen,|C:\Program Files (x86)\Matrix Games</span>
<span class="t" style="left:44.4px;top:81.00px;font:400 14px/14px 'Liberation Mono','Courier New',monospace;color:#000;letter-spacing:1.594px;">6</span>
<span class="t" style="left:59.199999999999996px;top:81.00px;font:400 14px/14px 'Liberation Mono','Courier New',monospace;color:#000;letter-spacing:1.599px;">-1,-1,-1,-1,-1,-1,-1,-1,-1,-1,-1,-1,-1,0,0,0,-1,0,0,0,0,0,-1,-1,-1,-1,-1,-1,-1,-1,-1</span>
<span class="t" style="left:44.4px;top:100.00px;font:400 14px/14px 'Liberation Mono','Courier New',monospace;color:#000;letter-spacing:1.594px;">7</span>
<span class="t" style="left:59.199999999999996px;top:100.00px;font:400 14px/14px 'Liberation Mono','Courier New',monospace;color:#000;letter-spacing:1.597px;">0,0,0</span>
<span class="t" style="left:44.4px;top:119.00px;font:400 14px/14px 'Liberation Mono','Courier New',monospace;color:#000;letter-spacing:1.594px;">8</span>
<span class="t" style="left:59.199999999999996px;top:119.00px;font:400 14px/14px 'Liberation Mono','Courier New',monospace;color:#000;letter-spacing:1.594px;">34</span>
<span class="t" style="left:14.4px;top:138.00px;font:400 14px/14px 'Liberation Mono','Courier New',monospace;color:#000;letter-spacing:1.598px;">8878</span>
<span class="t" style="left:59.199999999999996px;top:138.00px;font:400 14px/14px 'Liberation Mono','Courier New',monospace;color:#000;letter-spacing:1.598px;">5,0,0,0,0,1,0,0,0,0,0,0,1,0,5,0</span>
<span class="t" style="left:14.4px;top:157.00px;font:400 14px/14px 'Liberation Mono','Courier New',monospace;color:#000;letter-spacing:1.598px;">8879</span>
<span class="t" style="left:59.199999999999996px;top:157.00px;font:400 14px/14px 'Liberation Mono','Courier New',monospace;color:#000;letter-spacing:1.597px;">0,0,0,0,0</span>
<span class="t" style="left:14.4px;top:176.00px;font:400 14px/14px 'Liberation Mono','Courier New',monospace;color:#000;letter-spacing:1.598px;">8880</span>
<span class="t" style="left:59.199999999999996px;top:176.00px;font:400 14px/14px 'Liberation Mono','Courier New',monospace;color:#000;letter-spacing:1.597px;">0,0,0,0,0</span>
<div class="a" style="left:58px;top:192px;width:782px;height:19px;background:#efcb05;"></div>
<div class="a" style="left:88px;top:192px;width:20px;height:19px;background:#f1e2ad;"></div>
<div class="a" style="left:118px;top:192px;width:10px;height:19px;background:#f1e2ad;"></div>
<span class="t" style="left:14.4px;top:195.00px;font:400 14px/14px 'Liberation Mono','Courier New',monospace;color:#000;letter-spacing:1.598px;">8881</span>
<span class="t" style="left:59.199999999999996px;top:195.00px;font:400 14px/14px 'Liberation Mono','Courier New',monospace;color:#000;letter-spacing:1.598px;">-1,10,5,0,0,0,0,0,0,0,0,0,-1,-1,0,0,0,0,106</span>
<span class="t" style="left:14.4px;top:214.00px;font:400 14px/14px 'Liberation Mono','Courier New',monospace;color:#000;letter-spacing:1.598px;">8882</span>
<span class="t" style="left:59.199999999999996px;top:214.00px;font:400 14px/14px 'Liberation Mono','Courier New',monospace;color:#000;letter-spacing:1.598px;">-1,CSet</span>
<span class="t" style="left:14.4px;top:233.00px;font:400 14px/14px 'Liberation Mono','Courier New',monospace;color:#000;letter-spacing:1.598px;">8883</span>
<span class="t" style="left:59.199999999999996px;top:233.00px;font:400 14px/14px 'Liberation Mono','Courier New',monospace;color:#000;letter-spacing:1.598px;">-1,CSet</span>
<span class="t" style="left:14.4px;top:252.00px;font:400 14px/14px 'Liberation Mono','Courier New',monospace;color:#000;letter-spacing:1.598px;">8884</span>
<span class="t" style="left:59.199999999999996px;top:252.00px;font:400 14px/14px 'Liberation Mono','Courier New',monospace;color:#000;letter-spacing:1.598px;">-1,CSet</span>
<span class="t" style="left:14.4px;top:271.00px;font:400 14px/14px 'Liberation Mono','Courier New',monospace;color:#000;letter-spacing:1.598px;">9823</span>
<span class="t" style="left:59.199999999999996px;top:271.00px;font:400 14px/14px 'Liberation Mono','Courier New',monospace;color:#000;letter-spacing:1.598px;">3,0,0,0,0,0,0,0,0,0,0,1,0,0,2,0</span>
<span class="t" style="left:14.4px;top:290.00px;font:400 14px/14px 'Liberation Mono','Courier New',monospace;color:#000;letter-spacing:1.598px;">9824</span>
<span class="t" style="left:59.199999999999996px;top:290.00px;font:400 14px/14px 'Liberation Mono','Courier New',monospace;color:#000;letter-spacing:1.597px;">0,0,0,0,0</span>
<span class="t" style="left:14.4px;top:309.00px;font:400 14px/14px 'Liberation Mono','Courier New',monospace;color:#000;letter-spacing:1.598px;">9825</span>
<span class="t" style="left:59.199999999999996px;top:309.00px;font:400 14px/14px 'Liberation Mono','Courier New',monospace;color:#000;letter-spacing:1.597px;">0,0,0,0,0</span>
<div class="a" style="left:58px;top:325px;width:782px;height:19px;background:#efcb05;"></div>
<div class="a" style="left:88px;top:325px;width:10px;height:19px;background:#f1e2ad;"></div>
<div class="a" style="left:118px;top:325px;width:10px;height:19px;background:#ffa07a;"></div>
<span class="t" style="left:14.4px;top:328.00px;font:400 14px/14px 'Liberation Mono','Courier New',monospace;color:#000;letter-spacing:1.598px;">9826</span>
<span class="t" style="left:59.199999999999996px;top:328.00px;font:400 14px/14px 'Liberation Mono','Courier New',monospace;color:#000;letter-spacing:1.599px;">-1,5,10,0,0,0,0,0,0,0,0,0,-1,-1,0,0,0,0,99</span>
<span class="t" style="left:14.4px;top:347.00px;font:400 14px/14px 'Liberation Mono','Courier New',monospace;color:#000;letter-spacing:1.598px;">9827</span>
<span class="t" style="left:59.199999999999996px;top:347.00px;font:400 14px/14px 'Liberation Mono','Courier New',monospace;color:#000;letter-spacing:1.598px;">-1,CSet</span>
<span class="t" style="left:14.4px;top:366.00px;font:400 14px/14px 'Liberation Mono','Courier New',monospace;color:#000;letter-spacing:1.598px;">9828</span>
<span class="t" style="left:59.199999999999996px;top:366.00px;font:400 14px/14px 'Liberation Mono','Courier New',monospace;color:#000;letter-spacing:1.598px;">-1,CSet</span>
<span class="t" style="left:14.4px;top:385.00px;font:400 14px/14px 'Liberation Mono','Courier New',monospace;color:#000;letter-spacing:1.598px;">9829</span>
<span class="t" style="left:59.199999999999996px;top:385.00px;font:400 14px/14px 'Liberation Mono','Courier New',monospace;color:#000;letter-spacing:1.598px;">-1,CSet</span>
<div class="a" style="left:3px;top:134px;width:840px;height:1px;background:#000;"></div>
<div class="a" style="left:3px;top:267px;width:840px;height:1px;background:#000;"></div>
</div>
<div class="a" style="left:227.3px;top:1081px;width:1px;height:19px;background:#f8a888;"></div>
<div class="a" style="left:754px;top:324px;width:1.2px;height:24px;background:#18a018;"></div>
<div class="a" style="left:754px;top:365px;width:1.2px;height:70.5px;background:#18a018;"></div>
<div class="a" style="left:754px;top:453px;width:1.2px;height:70.5px;background:#18a018;"></div>
<div class="a" style="left:754px;top:524px;width:1px;height:36px;background:#9a9a9a;"></div>
<div class="a" style="left:754px;top:560px;width:1px;height:62px;background:#e0a0a8;"></div>
</body></html>
